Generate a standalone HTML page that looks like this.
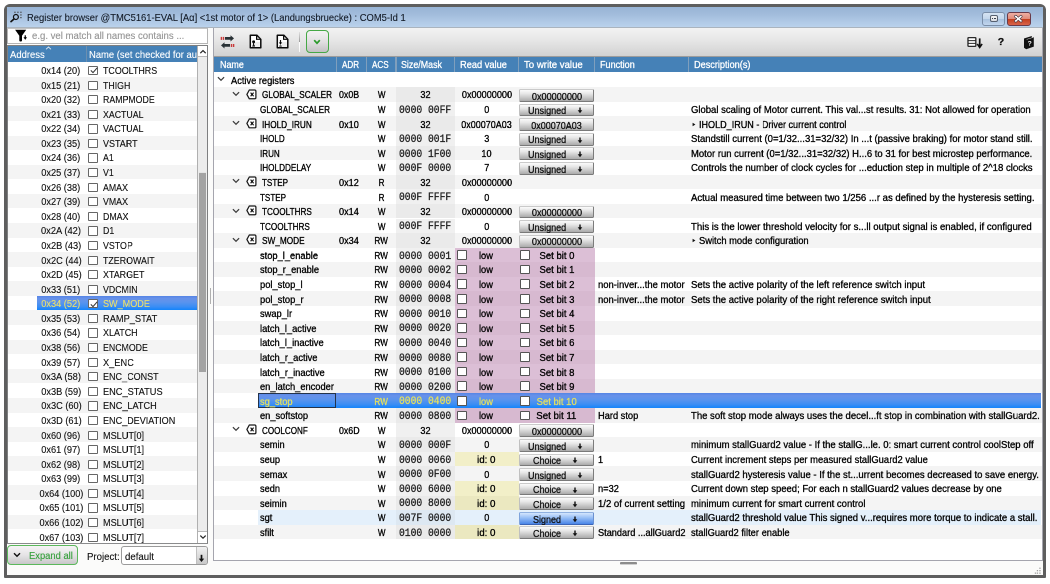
<!DOCTYPE html>
<html><head><meta charset="utf-8"><title>Register browser</title>
<style>
*{box-sizing:border-box;margin:0;padding:0}
html,body{width:1050px;height:584px;overflow:hidden;background:#fff;font-family:"Liberation Sans",sans-serif;color:#000}
.a{position:absolute}
.t{position:absolute;white-space:nowrap;-webkit-text-stroke:0.3px currentColor}
#win{left:4px;top:4px;width:1042px;height:574px;background:#5e5e5e;border-radius:6px 6px 1px 1px}
#title{left:7px;top:7px;width:1036px;height:21px;background:linear-gradient(#99b5d6,#a2bcdc 35%,#b3cce8 80%,#bad2ec);border-bottom:1px solid #aab4be}
#client{left:7px;top:28px;width:1036px;height:547px;background:#fbfbfa}
.hdr{background:#4581b7}
.lrow{position:absolute;left:8px;width:189px;height:14.58px}
.rrow{position:absolute;left:214px;width:827.5px;height:14.58px}
.cb{position:absolute;border:1px solid #555;background:#fff;border-radius:1px}
.btn{position:absolute;height:12.6px;border:1px solid;border-color:#cacaca #7c7c7c #7a7a7a #c0c0c0;border-radius:1.5px;background:linear-gradient(#fbfbfb,#e6e6e6 35%,#ababab)}
.bblue{border-color:#8fb0e0 #6a90d0 #3a64b8 #7fa4dc;background:linear-gradient(#d4e6fd,#9cc2f7 40%,#4a86e8)}
.mono{font-family:"Liberation Mono",monospace}
</style></head><body><div style="position:absolute;left:0;top:0;width:1050px;height:584px;transform:scale(0.5);transform-origin:0 0;will-change:transform"><div style="position:absolute;left:0;top:0;width:1050px;height:584px;transform:scale(2);transform-origin:0 0">
<div id="win" class="a"></div>
<div id="title" class="a"></div>
<div id="client" class="a"></div>

<div class="t" style="left:27.00px;top:10.00px;height:15px;line-height:15px;font-size:10.2px;color:#141c28;-webkit-text-stroke:0.12px currentColor"><span style="display:inline-block;transform:scaleX(0.923);transform-origin:0 50%">Register browser @TMC5161-EVAL [Aα] &lt;1st motor of 1&gt; (Landungsbruecke) : COM5-Id 1</span></div>
<svg class="a" style="left:8px;top:8px" width="18" height="18" viewBox="0 0 18 18">
<circle cx="7.9" cy="9" r="2.45" fill="none" stroke="#111" stroke-width="1.25"/>
<line x1="6.1" y1="10.9" x2="3" y2="13.6" stroke="#111" stroke-width="1.7" stroke-linecap="round"/>
<g fill="#5a5f66"><rect x="6" y="3.7" width="1.8" height="1.1"/><rect x="9" y="3.7" width="1.8" height="1.1"/><rect x="12" y="3.7" width="1.8" height="1.1"/><rect x="12" y="6.4" width="1.8" height="1.1"/><rect x="12" y="9.1" width="1.8" height="1.1"/></g>
</svg>
<div class="a" style="left:982px;top:12px;width:23px;height:13.5px;border:1px solid #7a8ea8;border-radius:3px;background:linear-gradient(#d6e4f3,#c3d6ec 50%,#a9c2df 52%,#c2d6ee)"></div>
<div class="a" style="left:989.6px;top:15.3px;width:8.2px;height:6.4px;border:1px solid #566070;border-radius:2px;background:linear-gradient(#f6f6f6,#d8dce2)"></div><div class="a" style="left:992px;top:17.8px;width:1.4px;height:1.4px;background:#3a4250"></div><div class="a" style="left:994.2px;top:17.8px;width:1.4px;height:1.4px;background:#3a4250"></div>
<div class="a" style="left:1007px;top:12px;width:23.5px;height:13.5px;border:1px solid #6a3a48;border-radius:3px;background:linear-gradient(#eeb0a4,#e08a78 50%,#c4401f 52%,#d8644a)"></div>
<svg class="a" style="left:1013px;top:14px" width="11" height="10" viewBox="0 0 11 10"><path d="M2.6 2.4 L8 7 M8 2.4 L2.6 7" stroke="#50404a" stroke-width="2.9" stroke-linecap="round"/><path d="M2.6 2.4 L8 7 M8 2.4 L2.6 7" stroke="#fff" stroke-width="1.5" stroke-linecap="round"/></svg>

<div class="a" style="left:7px;top:28.2px;width:201px;height:15.6px;background:#fff;border:1px solid #b4b4b4;border-top:1.3px solid #c4c4c4"></div>
<svg class="a" style="left:14px;top:29px" width="14" height="13" viewBox="0 0 14 13">
<path d="M1.1 0.8 H12.2 L8 6.7 V11.6 Q8 12.5 6.9 12.5 H6.4 Q5.3 12.5 5.3 11.6 V6.7 Z" fill="#000"/>
<path d="M10.65 6.3 H11.85 V8.3 H13 L11.25 10.9 L9.5 8.3 H10.65 Z" fill="#000"/>
</svg>
<div class="t" style="left:32.10px;top:29.30px;height:14.58px;line-height:14.58px;font-size:9.8px;color:#959595;-webkit-text-stroke:0.12px currentColor"><span style="display:inline-block;transform:scaleX(0.978);transform-origin:0 50%">e.g. vel match all names contains ...</span></div>
<div class="a" style="left:7px;top:45.4px;width:201px;height:498.4px;background:#fff;border:1px solid #7e7f80"></div>
<div class="a hdr" style="left:8px;top:46px;width:189px;height:16.3px"></div>
<div class="a" style="left:86px;top:46px;width:1px;height:16.3px;background:#6c8fb0"></div>
<div class="t" style="left:9.80px;top:48.10px;height:14.58px;line-height:14.58px;font-size:9.8px;color:#fff;-webkit-text-stroke:0.12px currentColor"><span style="display:inline-block;transform:scaleX(0.968);transform-origin:0 50%">Address</span></div>
<div class="a" style="left:89px;top:46px;width:107.5px;height:16px;overflow:hidden"><div class="t" style="left:0.00px;top:2.10px;height:14.58px;line-height:14.58px;font-size:9.8px;color:#fff;-webkit-text-stroke:0.12px currentColor"><span style="display:inline-block;transform:scaleX(0.963);transform-origin:0 50%">Name (set checked for au</span></div></div>
<svg class="a" style="left:44.5px;top:46.3px" width="7" height="4" viewBox="0 0 7 4"><path d="M1 3.3 L3.5 1 L6 3.3" stroke="#dfe8f2" stroke-width="0.9" fill="none"/></svg>
<div class="lrow" style="top:62.60px;background:#fff"></div>
<div class="t" style="left:31.20px;width:60.00px;text-align:center;top:64.00px;height:14.58px;line-height:14.58px;font-size:9.8px;color:#111;-webkit-text-stroke:0.12px currentColor"><span style="display:inline-block;transform:scaleX(0.942);transform-origin:50% 50%">0x14 (20)</span></div>
<div class="cb" style="left:88.3px;top:66.00px;width:9.6px;height:9.2px;border-color:#666;border-width:1.2px"></div>
<svg class="a" style="left:89.5px;top:67.30px" width="8" height="7" viewBox="0 0 8 7"><path d="M0.8 3.4 L3 5.6 L7.2 0.8" stroke="#333" stroke-width="1" fill="none"/></svg>
<div class="t" style="left:102.50px;top:64.00px;height:14.58px;line-height:14.58px;font-size:9.8px;color:#111;-webkit-text-stroke:0.12px currentColor"><span style="display:inline-block;transform:scaleX(0.907);transform-origin:0 50%">TCOOLTHRS</span></div>
<div class="lrow" style="top:77.18px;background:#f4f4f4"></div>
<div class="t" style="left:31.20px;width:60.00px;text-align:center;top:78.58px;height:14.58px;line-height:14.58px;font-size:9.8px;color:#111;-webkit-text-stroke:0.12px currentColor"><span style="display:inline-block;transform:scaleX(0.942);transform-origin:50% 50%">0x15 (21)</span></div>
<div class="cb" style="left:88.3px;top:80.58px;width:9.6px;height:9.2px;border-color:#666;border-width:1.2px"></div>
<div class="t" style="left:102.50px;top:78.58px;height:14.58px;line-height:14.58px;font-size:9.8px;color:#111;-webkit-text-stroke:0.12px currentColor"><span style="display:inline-block;transform:scaleX(0.896);transform-origin:0 50%">THIGH</span></div>
<div class="lrow" style="top:91.76px;background:#fff"></div>
<div class="t" style="left:31.20px;width:60.00px;text-align:center;top:93.16px;height:14.58px;line-height:14.58px;font-size:9.8px;color:#111;-webkit-text-stroke:0.12px currentColor"><span style="display:inline-block;transform:scaleX(0.942);transform-origin:50% 50%">0x20 (32)</span></div>
<div class="cb" style="left:88.3px;top:95.16px;width:9.6px;height:9.2px;border-color:#666;border-width:1.2px"></div>
<div class="t" style="left:102.50px;top:93.16px;height:14.58px;line-height:14.58px;font-size:9.8px;color:#111;-webkit-text-stroke:0.12px currentColor"><span style="display:inline-block;transform:scaleX(0.896);transform-origin:0 50%">RAMPMODE</span></div>
<div class="lrow" style="top:106.34px;background:#f4f4f4"></div>
<div class="t" style="left:31.20px;width:60.00px;text-align:center;top:107.74px;height:14.58px;line-height:14.58px;font-size:9.8px;color:#111;-webkit-text-stroke:0.12px currentColor"><span style="display:inline-block;transform:scaleX(0.942);transform-origin:50% 50%">0x21 (33)</span></div>
<div class="cb" style="left:88.3px;top:109.74px;width:9.6px;height:9.2px;border-color:#666;border-width:1.2px"></div>
<div class="t" style="left:102.50px;top:107.74px;height:14.58px;line-height:14.58px;font-size:9.8px;color:#111;-webkit-text-stroke:0.12px currentColor"><span style="display:inline-block;transform:scaleX(0.896);transform-origin:0 50%">XACTUAL</span></div>
<div class="lrow" style="top:120.92px;background:#fff"></div>
<div class="t" style="left:31.20px;width:60.00px;text-align:center;top:122.32px;height:14.58px;line-height:14.58px;font-size:9.8px;color:#111;-webkit-text-stroke:0.12px currentColor"><span style="display:inline-block;transform:scaleX(0.942);transform-origin:50% 50%">0x22 (34)</span></div>
<div class="cb" style="left:88.3px;top:124.32px;width:9.6px;height:9.2px;border-color:#666;border-width:1.2px"></div>
<div class="t" style="left:102.50px;top:122.32px;height:14.58px;line-height:14.58px;font-size:9.8px;color:#111;-webkit-text-stroke:0.12px currentColor"><span style="display:inline-block;transform:scaleX(0.911);transform-origin:0 50%">VACTUAL</span></div>
<div class="lrow" style="top:135.50px;background:#f4f4f4"></div>
<div class="t" style="left:31.20px;width:60.00px;text-align:center;top:136.90px;height:14.58px;line-height:14.58px;font-size:9.8px;color:#111;-webkit-text-stroke:0.12px currentColor"><span style="display:inline-block;transform:scaleX(0.942);transform-origin:50% 50%">0x23 (35)</span></div>
<div class="cb" style="left:88.3px;top:138.90px;width:9.6px;height:9.2px;border-color:#666;border-width:1.2px"></div>
<div class="t" style="left:102.50px;top:136.90px;height:14.58px;line-height:14.58px;font-size:9.8px;color:#111;-webkit-text-stroke:0.12px currentColor"><span style="display:inline-block;transform:scaleX(0.917);transform-origin:0 50%">VSTART</span></div>
<div class="lrow" style="top:150.08px;background:#fff"></div>
<div class="t" style="left:31.20px;width:60.00px;text-align:center;top:151.48px;height:14.58px;line-height:14.58px;font-size:9.8px;color:#111;-webkit-text-stroke:0.12px currentColor"><span style="display:inline-block;transform:scaleX(0.942);transform-origin:50% 50%">0x24 (36)</span></div>
<div class="cb" style="left:88.3px;top:153.48px;width:9.6px;height:9.2px;border-color:#666;border-width:1.2px"></div>
<div class="t" style="left:102.50px;top:151.48px;height:14.58px;line-height:14.58px;font-size:9.8px;color:#111;-webkit-text-stroke:0.12px currentColor"><span style="display:inline-block;transform:scaleX(0.896);transform-origin:0 50%">A1</span></div>
<div class="lrow" style="top:164.66px;background:#f4f4f4"></div>
<div class="t" style="left:31.20px;width:60.00px;text-align:center;top:166.06px;height:14.58px;line-height:14.58px;font-size:9.8px;color:#111;-webkit-text-stroke:0.12px currentColor"><span style="display:inline-block;transform:scaleX(0.942);transform-origin:50% 50%">0x25 (37)</span></div>
<div class="cb" style="left:88.3px;top:168.06px;width:9.6px;height:9.2px;border-color:#666;border-width:1.2px"></div>
<div class="t" style="left:102.50px;top:166.06px;height:14.58px;line-height:14.58px;font-size:9.8px;color:#111;-webkit-text-stroke:0.12px currentColor"><span style="display:inline-block;transform:scaleX(0.896);transform-origin:0 50%">V1</span></div>
<div class="lrow" style="top:179.24px;background:#fff"></div>
<div class="t" style="left:31.20px;width:60.00px;text-align:center;top:180.64px;height:14.58px;line-height:14.58px;font-size:9.8px;color:#111;-webkit-text-stroke:0.12px currentColor"><span style="display:inline-block;transform:scaleX(0.942);transform-origin:50% 50%">0x26 (38)</span></div>
<div class="cb" style="left:88.3px;top:182.64px;width:9.6px;height:9.2px;border-color:#666;border-width:1.2px"></div>
<div class="t" style="left:102.50px;top:180.64px;height:14.58px;line-height:14.58px;font-size:9.8px;color:#111;-webkit-text-stroke:0.12px currentColor"><span style="display:inline-block;transform:scaleX(0.896);transform-origin:0 50%">AMAX</span></div>
<div class="lrow" style="top:193.82px;background:#f4f4f4"></div>
<div class="t" style="left:31.20px;width:60.00px;text-align:center;top:195.22px;height:14.58px;line-height:14.58px;font-size:9.8px;color:#111;-webkit-text-stroke:0.12px currentColor"><span style="display:inline-block;transform:scaleX(0.942);transform-origin:50% 50%">0x27 (39)</span></div>
<div class="cb" style="left:88.3px;top:197.22px;width:9.6px;height:9.2px;border-color:#666;border-width:1.2px"></div>
<div class="t" style="left:102.50px;top:195.22px;height:14.58px;line-height:14.58px;font-size:9.8px;color:#111;-webkit-text-stroke:0.12px currentColor"><span style="display:inline-block;transform:scaleX(0.896);transform-origin:0 50%">VMAX</span></div>
<div class="lrow" style="top:208.40px;background:#fff"></div>
<div class="t" style="left:31.20px;width:60.00px;text-align:center;top:209.80px;height:14.58px;line-height:14.58px;font-size:9.8px;color:#111;-webkit-text-stroke:0.12px currentColor"><span style="display:inline-block;transform:scaleX(0.942);transform-origin:50% 50%">0x28 (40)</span></div>
<div class="cb" style="left:88.3px;top:211.80px;width:9.6px;height:9.2px;border-color:#666;border-width:1.2px"></div>
<div class="t" style="left:102.50px;top:209.80px;height:14.58px;line-height:14.58px;font-size:9.8px;color:#111;-webkit-text-stroke:0.12px currentColor"><span style="display:inline-block;transform:scaleX(0.896);transform-origin:0 50%">DMAX</span></div>
<div class="lrow" style="top:222.98px;background:#f4f4f4"></div>
<div class="t" style="left:31.20px;width:60.00px;text-align:center;top:224.38px;height:14.58px;line-height:14.58px;font-size:9.8px;color:#111;-webkit-text-stroke:0.12px currentColor"><span style="display:inline-block;transform:scaleX(0.953);transform-origin:50% 50%">0x2A (42)</span></div>
<div class="cb" style="left:88.3px;top:226.38px;width:9.6px;height:9.2px;border-color:#666;border-width:1.2px"></div>
<div class="t" style="left:102.50px;top:224.38px;height:14.58px;line-height:14.58px;font-size:9.8px;color:#111;-webkit-text-stroke:0.12px currentColor"><span style="display:inline-block;transform:scaleX(0.896);transform-origin:0 50%">D1</span></div>
<div class="lrow" style="top:237.56px;background:#fff"></div>
<div class="t" style="left:31.20px;width:60.00px;text-align:center;top:238.96px;height:14.58px;line-height:14.58px;font-size:9.8px;color:#111;-webkit-text-stroke:0.12px currentColor"><span style="display:inline-block;transform:scaleX(0.941);transform-origin:50% 50%">0x2B (43)</span></div>
<div class="cb" style="left:88.3px;top:240.96px;width:9.6px;height:9.2px;border-color:#666;border-width:1.2px"></div>
<div class="t" style="left:102.50px;top:238.96px;height:14.58px;line-height:14.58px;font-size:9.8px;color:#111;-webkit-text-stroke:0.12px currentColor"><span style="display:inline-block;transform:scaleX(0.901);transform-origin:0 50%">VSTOP</span></div>
<div class="lrow" style="top:252.14px;background:#f4f4f4"></div>
<div class="t" style="left:31.20px;width:60.00px;text-align:center;top:253.54px;height:14.58px;line-height:14.58px;font-size:9.8px;color:#111;-webkit-text-stroke:0.12px currentColor"><span style="display:inline-block;transform:scaleX(0.941);transform-origin:50% 50%">0x2C (44)</span></div>
<div class="cb" style="left:88.3px;top:255.54px;width:9.6px;height:9.2px;border-color:#666;border-width:1.2px"></div>
<div class="t" style="left:102.50px;top:253.54px;height:14.58px;line-height:14.58px;font-size:9.8px;color:#111;-webkit-text-stroke:0.12px currentColor"><span style="display:inline-block;transform:scaleX(0.902);transform-origin:0 50%">TZEROWAIT</span></div>
<div class="lrow" style="top:266.72px;background:#fff"></div>
<div class="t" style="left:31.20px;width:60.00px;text-align:center;top:268.12px;height:14.58px;line-height:14.58px;font-size:9.8px;color:#111;-webkit-text-stroke:0.12px currentColor"><span style="display:inline-block;transform:scaleX(0.941);transform-origin:50% 50%">0x2D (45)</span></div>
<div class="cb" style="left:88.3px;top:270.12px;width:9.6px;height:9.2px;border-color:#666;border-width:1.2px"></div>
<div class="t" style="left:102.50px;top:268.12px;height:14.58px;line-height:14.58px;font-size:9.8px;color:#111;-webkit-text-stroke:0.12px currentColor"><span style="display:inline-block;transform:scaleX(0.910);transform-origin:0 50%">XTARGET</span></div>
<div class="lrow" style="top:281.30px;background:#f4f4f4"></div>
<div class="t" style="left:31.20px;width:60.00px;text-align:center;top:282.70px;height:14.58px;line-height:14.58px;font-size:9.8px;color:#111;-webkit-text-stroke:0.12px currentColor"><span style="display:inline-block;transform:scaleX(0.942);transform-origin:50% 50%">0x33 (51)</span></div>
<div class="cb" style="left:88.3px;top:284.70px;width:9.6px;height:9.2px;border-color:#666;border-width:1.2px"></div>
<div class="t" style="left:102.50px;top:282.70px;height:14.58px;line-height:14.58px;font-size:9.8px;color:#111;-webkit-text-stroke:0.12px currentColor"><span style="display:inline-block;transform:scaleX(0.896);transform-origin:0 50%">VDCMIN</span></div>
<div class="lrow" style="top:295.88px;background:#fff"></div>
<div class="a" style="left:37px;top:295.88px;width:160px;height:14.58px;background:linear-gradient(#5585e6,#6892ea 18%,#5a94ee 45%,#3d8ef4 75%,#1485fb)"></div>
<div class="t" style="left:31.20px;width:60.00px;text-align:center;top:297.28px;height:14.58px;line-height:14.58px;font-size:9.8px;color:#e8e070;-webkit-text-stroke:0.12px currentColor"><span style="display:inline-block;transform:scaleX(0.942);transform-origin:50% 50%">0x34 (52)</span></div>
<div class="cb" style="left:88.3px;top:299.28px;width:9.6px;height:9.2px;border-color:#666;border-width:1.2px"></div>
<svg class="a" style="left:89.5px;top:300.58px" width="8" height="7" viewBox="0 0 8 7"><path d="M0.8 3.4 L3 5.6 L7.2 0.8" stroke="#333" stroke-width="1" fill="none"/></svg>
<div class="t" style="left:102.50px;top:297.28px;height:14.58px;line-height:14.58px;font-size:9.8px;color:#e8e070;-webkit-text-stroke:0.12px currentColor"><span style="display:inline-block;transform:scaleX(0.926);transform-origin:0 50%">SW_MODE</span></div>
<div class="lrow" style="top:310.46px;background:#f4f4f4"></div>
<div class="t" style="left:31.20px;width:60.00px;text-align:center;top:311.86px;height:14.58px;line-height:14.58px;font-size:9.8px;color:#111;-webkit-text-stroke:0.12px currentColor"><span style="display:inline-block;transform:scaleX(0.942);transform-origin:50% 50%">0x35 (53)</span></div>
<div class="cb" style="left:88.3px;top:313.86px;width:9.6px;height:9.2px;border-color:#666;border-width:1.2px"></div>
<div class="t" style="left:102.50px;top:311.86px;height:14.58px;line-height:14.58px;font-size:9.8px;color:#111;-webkit-text-stroke:0.12px currentColor"><span style="display:inline-block;transform:scaleX(0.946);transform-origin:0 50%">RAMP_STAT</span></div>
<div class="lrow" style="top:325.04px;background:#fff"></div>
<div class="t" style="left:31.20px;width:60.00px;text-align:center;top:326.44px;height:14.58px;line-height:14.58px;font-size:9.8px;color:#111;-webkit-text-stroke:0.12px currentColor"><span style="display:inline-block;transform:scaleX(0.942);transform-origin:50% 50%">0x36 (54)</span></div>
<div class="cb" style="left:88.3px;top:328.44px;width:9.6px;height:9.2px;border-color:#666;border-width:1.2px"></div>
<div class="t" style="left:102.50px;top:326.44px;height:14.58px;line-height:14.58px;font-size:9.8px;color:#111;-webkit-text-stroke:0.12px currentColor"><span style="display:inline-block;transform:scaleX(0.913);transform-origin:0 50%">XLATCH</span></div>
<div class="lrow" style="top:339.62px;background:#f4f4f4"></div>
<div class="t" style="left:31.20px;width:60.00px;text-align:center;top:341.02px;height:14.58px;line-height:14.58px;font-size:9.8px;color:#111;-webkit-text-stroke:0.12px currentColor"><span style="display:inline-block;transform:scaleX(0.942);transform-origin:50% 50%">0x38 (56)</span></div>
<div class="cb" style="left:88.3px;top:343.02px;width:9.6px;height:9.2px;border-color:#666;border-width:1.2px"></div>
<div class="t" style="left:102.50px;top:341.02px;height:14.58px;line-height:14.58px;font-size:9.8px;color:#111;-webkit-text-stroke:0.12px currentColor"><span style="display:inline-block;transform:scaleX(0.896);transform-origin:0 50%">ENCMODE</span></div>
<div class="lrow" style="top:354.20px;background:#fff"></div>
<div class="t" style="left:31.20px;width:60.00px;text-align:center;top:355.60px;height:14.58px;line-height:14.58px;font-size:9.8px;color:#111;-webkit-text-stroke:0.12px currentColor"><span style="display:inline-block;transform:scaleX(0.942);transform-origin:50% 50%">0x39 (57)</span></div>
<div class="cb" style="left:88.3px;top:357.60px;width:9.6px;height:9.2px;border-color:#666;border-width:1.2px"></div>
<div class="t" style="left:102.50px;top:355.60px;height:14.58px;line-height:14.58px;font-size:9.8px;color:#111;-webkit-text-stroke:0.12px currentColor"><span style="display:inline-block;transform:scaleX(0.943);transform-origin:0 50%">X_ENC</span></div>
<div class="lrow" style="top:368.78px;background:#f4f4f4"></div>
<div class="t" style="left:31.20px;width:60.00px;text-align:center;top:370.18px;height:14.58px;line-height:14.58px;font-size:9.8px;color:#111;-webkit-text-stroke:0.12px currentColor"><span style="display:inline-block;transform:scaleX(0.953);transform-origin:50% 50%">0x3A (58)</span></div>
<div class="cb" style="left:88.3px;top:372.18px;width:9.6px;height:9.2px;border-color:#666;border-width:1.2px"></div>
<div class="t" style="left:102.50px;top:370.18px;height:14.58px;line-height:14.58px;font-size:9.8px;color:#111;-webkit-text-stroke:0.12px currentColor"><span style="display:inline-block;transform:scaleX(0.921);transform-origin:0 50%">ENC_CONST</span></div>
<div class="lrow" style="top:383.36px;background:#fff"></div>
<div class="t" style="left:31.20px;width:60.00px;text-align:center;top:384.76px;height:14.58px;line-height:14.58px;font-size:9.8px;color:#111;-webkit-text-stroke:0.12px currentColor"><span style="display:inline-block;transform:scaleX(0.941);transform-origin:50% 50%">0x3B (59)</span></div>
<div class="cb" style="left:88.3px;top:386.76px;width:9.6px;height:9.2px;border-color:#666;border-width:1.2px"></div>
<div class="t" style="left:102.50px;top:384.76px;height:14.58px;line-height:14.58px;font-size:9.8px;color:#111;-webkit-text-stroke:0.12px currentColor"><span style="display:inline-block;transform:scaleX(0.941);transform-origin:0 50%">ENC_STATUS</span></div>
<div class="lrow" style="top:397.94px;background:#f4f4f4"></div>
<div class="t" style="left:31.20px;width:60.00px;text-align:center;top:399.34px;height:14.58px;line-height:14.58px;font-size:9.8px;color:#111;-webkit-text-stroke:0.12px currentColor"><span style="display:inline-block;transform:scaleX(0.941);transform-origin:50% 50%">0x3C (60)</span></div>
<div class="cb" style="left:88.3px;top:401.34px;width:9.6px;height:9.2px;border-color:#666;border-width:1.2px"></div>
<div class="t" style="left:102.50px;top:399.34px;height:14.58px;line-height:14.58px;font-size:9.8px;color:#111;-webkit-text-stroke:0.12px currentColor"><span style="display:inline-block;transform:scaleX(0.934);transform-origin:0 50%">ENC_LATCH</span></div>
<div class="lrow" style="top:412.52px;background:#fff"></div>
<div class="t" style="left:31.20px;width:60.00px;text-align:center;top:413.92px;height:14.58px;line-height:14.58px;font-size:9.8px;color:#111;-webkit-text-stroke:0.12px currentColor"><span style="display:inline-block;transform:scaleX(0.941);transform-origin:50% 50%">0x3D (61)</span></div>
<div class="cb" style="left:88.3px;top:415.92px;width:9.6px;height:9.2px;border-color:#666;border-width:1.2px"></div>
<div class="t" style="left:102.50px;top:413.92px;height:14.58px;line-height:14.58px;font-size:9.8px;color:#111;-webkit-text-stroke:0.12px currentColor"><span style="display:inline-block;transform:scaleX(0.924);transform-origin:0 50%">ENC_DEVIATION</span></div>
<div class="lrow" style="top:427.10px;background:#f4f4f4"></div>
<div class="t" style="left:31.20px;width:60.00px;text-align:center;top:428.50px;height:14.58px;line-height:14.58px;font-size:9.8px;color:#111;-webkit-text-stroke:0.12px currentColor"><span style="display:inline-block;transform:scaleX(0.942);transform-origin:50% 50%">0x60 (96)</span></div>
<div class="cb" style="left:88.3px;top:430.50px;width:9.6px;height:9.2px;border-color:#666;border-width:1.2px"></div>
<div class="t" style="left:102.50px;top:428.50px;height:14.58px;line-height:14.58px;font-size:9.8px;color:#111;-webkit-text-stroke:0.12px currentColor"><span style="display:inline-block;transform:scaleX(0.931);transform-origin:0 50%">MSLUT[0]</span></div>
<div class="lrow" style="top:441.68px;background:#fff"></div>
<div class="t" style="left:31.20px;width:60.00px;text-align:center;top:443.08px;height:14.58px;line-height:14.58px;font-size:9.8px;color:#111;-webkit-text-stroke:0.12px currentColor"><span style="display:inline-block;transform:scaleX(0.942);transform-origin:50% 50%">0x61 (97)</span></div>
<div class="cb" style="left:88.3px;top:445.08px;width:9.6px;height:9.2px;border-color:#666;border-width:1.2px"></div>
<div class="t" style="left:102.50px;top:443.08px;height:14.58px;line-height:14.58px;font-size:9.8px;color:#111;-webkit-text-stroke:0.12px currentColor"><span style="display:inline-block;transform:scaleX(0.931);transform-origin:0 50%">MSLUT[1]</span></div>
<div class="lrow" style="top:456.26px;background:#f4f4f4"></div>
<div class="t" style="left:31.20px;width:60.00px;text-align:center;top:457.66px;height:14.58px;line-height:14.58px;font-size:9.8px;color:#111;-webkit-text-stroke:0.12px currentColor"><span style="display:inline-block;transform:scaleX(0.942);transform-origin:50% 50%">0x62 (98)</span></div>
<div class="cb" style="left:88.3px;top:459.66px;width:9.6px;height:9.2px;border-color:#666;border-width:1.2px"></div>
<div class="t" style="left:102.50px;top:457.66px;height:14.58px;line-height:14.58px;font-size:9.8px;color:#111;-webkit-text-stroke:0.12px currentColor"><span style="display:inline-block;transform:scaleX(0.931);transform-origin:0 50%">MSLUT[2]</span></div>
<div class="lrow" style="top:470.84px;background:#fff"></div>
<div class="t" style="left:31.20px;width:60.00px;text-align:center;top:472.24px;height:14.58px;line-height:14.58px;font-size:9.8px;color:#111;-webkit-text-stroke:0.12px currentColor"><span style="display:inline-block;transform:scaleX(0.942);transform-origin:50% 50%">0x63 (99)</span></div>
<div class="cb" style="left:88.3px;top:474.24px;width:9.6px;height:9.2px;border-color:#666;border-width:1.2px"></div>
<div class="t" style="left:102.50px;top:472.24px;height:14.58px;line-height:14.58px;font-size:9.8px;color:#111;-webkit-text-stroke:0.12px currentColor"><span style="display:inline-block;transform:scaleX(0.931);transform-origin:0 50%">MSLUT[3]</span></div>
<div class="lrow" style="top:485.42px;background:#f4f4f4"></div>
<div class="t" style="left:31.20px;width:60.00px;text-align:center;top:486.82px;height:14.58px;line-height:14.58px;font-size:9.8px;color:#111;-webkit-text-stroke:0.12px currentColor"><span style="display:inline-block;transform:scaleX(0.937);transform-origin:50% 50%">0x64 (100)</span></div>
<div class="cb" style="left:88.3px;top:488.82px;width:9.6px;height:9.2px;border-color:#666;border-width:1.2px"></div>
<div class="t" style="left:102.50px;top:486.82px;height:14.58px;line-height:14.58px;font-size:9.8px;color:#111;-webkit-text-stroke:0.12px currentColor"><span style="display:inline-block;transform:scaleX(0.931);transform-origin:0 50%">MSLUT[4]</span></div>
<div class="lrow" style="top:500.00px;background:#fff"></div>
<div class="t" style="left:31.20px;width:60.00px;text-align:center;top:501.40px;height:14.58px;line-height:14.58px;font-size:9.8px;color:#111;-webkit-text-stroke:0.12px currentColor"><span style="display:inline-block;transform:scaleX(0.937);transform-origin:50% 50%">0x65 (101)</span></div>
<div class="cb" style="left:88.3px;top:503.40px;width:9.6px;height:9.2px;border-color:#666;border-width:1.2px"></div>
<div class="t" style="left:102.50px;top:501.40px;height:14.58px;line-height:14.58px;font-size:9.8px;color:#111;-webkit-text-stroke:0.12px currentColor"><span style="display:inline-block;transform:scaleX(0.931);transform-origin:0 50%">MSLUT[5]</span></div>
<div class="lrow" style="top:514.58px;background:#f4f4f4"></div>
<div class="t" style="left:31.20px;width:60.00px;text-align:center;top:515.98px;height:14.58px;line-height:14.58px;font-size:9.8px;color:#111;-webkit-text-stroke:0.12px currentColor"><span style="display:inline-block;transform:scaleX(0.937);transform-origin:50% 50%">0x66 (102)</span></div>
<div class="cb" style="left:88.3px;top:517.98px;width:9.6px;height:9.2px;border-color:#666;border-width:1.2px"></div>
<div class="t" style="left:102.50px;top:515.98px;height:14.58px;line-height:14.58px;font-size:9.8px;color:#111;-webkit-text-stroke:0.12px currentColor"><span style="display:inline-block;transform:scaleX(0.931);transform-origin:0 50%">MSLUT[6]</span></div>
<div class="lrow" style="top:529.16px;background:#fff"></div>
<div class="t" style="left:31.20px;width:60.00px;text-align:center;top:530.56px;height:14.58px;line-height:14.58px;font-size:9.8px;color:#111;-webkit-text-stroke:0.12px currentColor"><span style="display:inline-block;transform:scaleX(0.937);transform-origin:50% 50%">0x67 (103)</span></div>
<div class="cb" style="left:88.3px;top:532.56px;width:9.6px;height:9.2px;border-color:#666;border-width:1.2px"></div>
<div class="t" style="left:102.50px;top:530.56px;height:14.58px;line-height:14.58px;font-size:9.8px;color:#111;-webkit-text-stroke:0.12px currentColor"><span style="display:inline-block;transform:scaleX(0.931);transform-origin:0 50%">MSLUT[7]</span></div>
<div class="a" style="left:7px;top:542.9px;width:201px;height:1px;background:#8a8b8c"></div>
<div class="a" style="left:197.3px;top:46.3px;width:9.8px;height:497px;background:#ececec;border-left:1px solid #b0b0b0"></div>
<div class="a" style="left:198.1px;top:46.3px;width:9px;height:11.2px;background:#fff;border-bottom:1px solid #b8b8b8"></div>
<svg class="a" style="left:199px;top:48.5px" width="8" height="6" viewBox="0 0 8 6"><path d="M1.3 4.2 L4 1.6 L6.7 4.2" stroke="#222" stroke-width="1.2" fill="none"/></svg>
<div class="a" style="left:198.1px;top:531px;width:9px;height:12.3px;background:#fff;border-top:1px solid #b8b8b8"></div>
<svg class="a" style="left:199px;top:534px" width="8" height="6" viewBox="0 0 8 6"><path d="M1.3 1.6 L4 4.2 L6.7 1.6" stroke="#222" stroke-width="1.2" fill="none"/></svg>
<div class="a" style="left:198.8px;top:172.2px;width:7.5px;height:200.3px;background:#a3a3a3;border-top:1px solid #e4e4e4"></div>
<div class="a" style="left:209.8px;top:288.4px;width:1.2px;height:15.6px;background:#b0b0b0"></div>
<div class="a" style="left:7px;top:545.3px;width:71px;height:19.7px;border:1.3px solid #5cb85c;border-radius:4px;background:linear-gradient(#f6f4f6,#e6e4e6 50%,#c9c8ca)"></div>
<svg class="a" style="left:13px;top:552px" width="8" height="6" viewBox="0 0 8 6"><path d="M1 1.3 L4 4.3 L7 1.3" stroke="#111" stroke-width="1.4" fill="none"/></svg>
<div class="t" style="left:29.00px;top:547.80px;height:15px;line-height:15px;font-size:9.8px;color:#36a03c;-webkit-text-stroke:0.12px currentColor"><span style="display:inline-block;transform:scaleX(0.958);transform-origin:0 50%">Expand all</span></div>
<div class="t" style="left:86.70px;top:548.50px;height:15px;line-height:15px;font-size:9.8px;color:#111;-webkit-text-stroke:0.12px currentColor"><span style="display:inline-block;transform:scaleX(0.982);transform-origin:0 50%">Project:</span></div>
<div class="a" style="left:121px;top:546px;width:86.7px;height:19.4px;border:1px solid #9a9a9a;border-radius:3px;background:#fff;overflow:hidden">
<div class="a" style="left:73.7px;top:0;width:12px;height:18px;border-left:1px solid #c0c0c0;background:linear-gradient(#f2f2f2,#c6c6c6)"></div></div>
<svg class="a" style="left:198.3px;top:553.6px" width="7" height="9" viewBox="0 0 7 9"><path d="M3.5 0.8 V6" stroke="#111" stroke-width="1.7"/><path d="M0.8 4.6 L3.5 8 L6.2 4.6 Z" fill="#111"/></svg>
<div class="t" style="left:125.40px;top:548.50px;height:15px;line-height:15px;font-size:9.8px;color:#111;-webkit-text-stroke:0.12px currentColor"><span style="display:inline-block;transform:scaleX(0.984);transform-origin:0 50%">default</span></div>
<div class="a" style="left:213.3px;top:28px;width:829.5px;height:532.8px;background:#fff;border:1px solid #a5a5ae;border-top:none"></div>
<div class="a" style="left:214px;top:28.2px;width:828px;height:28.4px;background:linear-gradient(#f3f3f3,#e6e6e6 45%,#d2d2d2);border-bottom:1px solid #9c9c9c"></div>
<svg class="a" style="left:219px;top:34px" width="17" height="16" viewBox="0 0 17 16">
<g fill="#c83a3a"><rect x="1.7" y="2.9" width="1.4" height="3"/><rect x="3.8" y="2.9" width="1.4" height="3"/>
<rect x="11.8" y="10" width="1.4" height="3"/><rect x="13.9" y="10" width="1.4" height="3"/></g>
<path d="M6 3 H11.5 V1.3 L15 4.4 L11.5 7.5 V5.8 H6 Z" fill="#2a3236"/>
<path d="M11 10 H5.5 V8.3 L2 11.4 L5.5 14.5 V12.8 H11 Z" fill="#2a3236"/>
</svg>
<svg class="a" style="left:248.6px;top:34px" width="13" height="15" viewBox="0 0 13 15">
<path d="M1.3 1.2 H7.8 L11.8 5.4 V13.7 H1.3 Z" fill="#fff" stroke="#0a0a0a" stroke-width="1.5" stroke-linejoin="round"/>
<path d="M7.6 1.8 V5.3 H11.4" fill="none" stroke="#0a0a0a" stroke-width="1.2"/>
<path d="M8.4 2.6 L10.6 4.7 H8.4 Z" fill="#b8b8b8"/>
<rect x="6" y="8" width="4.8" height="4.8" fill="#ededed"/>
<circle cx="4.5" cy="7.7" r="1.35" fill="#000"/><rect x="3.9" y="8" width="1.2" height="3.6" fill="#111"/><path d="M3.1 12.6 L3.6 11.2 H5.4 L5.9 12.6 Z" fill="#222"/>
</svg>
<svg class="a" style="left:275.7px;top:34px" width="13" height="15" viewBox="0 0 13 15">
<path d="M1.3 1.2 H7.8 L11.8 5.4 V13.7 H1.3 Z" fill="#fff" stroke="#0a0a0a" stroke-width="1.5" stroke-linejoin="round"/>
<path d="M7.6 1.8 V5.3 H11.4" fill="none" stroke="#0a0a0a" stroke-width="1.2"/>
<path d="M8.4 2.6 L10.6 4.7 H8.4 Z" fill="#b8b8b8"/>
<rect x="6" y="8" width="4.8" height="4.8" fill="#ededed"/>
<rect x="3.9" y="6" width="1.2" height="3" fill="#111"/><path d="M2.9 8.4 H6.1 L4.5 10.9 Z" fill="#000"/><path d="M3.1 12.6 L3.6 11.4 H5.4 L5.9 12.6 Z" fill="#222"/>
</svg>
<div class="a" style="left:299px;top:32px;width:1px;height:10px;background:linear-gradient(#e0e0e0,#9a9a9a)"></div><div class="a" style="left:299px;top:42px;width:1px;height:10px;background:linear-gradient(#fff,#f8f8f8)"></div>
<div class="a" style="left:305.9px;top:30.4px;width:23.3px;height:23px;border:1.2px solid #46a846;border-radius:4px;background:linear-gradient(#f4f2f4,#e2e0e2 50%,#c4c2c4)"></div>
<svg class="a" style="left:313px;top:38.5px" width="8" height="6" viewBox="0 0 8 6"><path d="M1.2 1.2 L4 4.2 L6.8 1.2" stroke="#2a9a2a" stroke-width="1.7" fill="none"/></svg>
<svg class="a" style="left:966px;top:36px" width="17" height="13" viewBox="0 0 17 13">
<rect x="1.3" y="1" width="9.2" height="10" rx="1.2" fill="#2a2a2a"/>
<g fill="#fff"><rect x="2.6" y="2.3" width="6.6" height="1.8" rx="0.5"/><rect x="2.6" y="5.1" width="6.6" height="1.8" rx="0.5"/><rect x="2.6" y="7.9" width="6.6" height="1.8" rx="0.5"/></g>
<path d="M13.7 2.4 V10.2" stroke="#111" stroke-width="1.7"/><path d="M11.3 7.9 L13.7 11.4 L16.1 7.9" stroke="#111" stroke-width="1.6" fill="none" stroke-linejoin="miter"/>
</svg>
<div class="t" style="left:997.8px;top:33.7px;font-size:10.5px;font-weight:bold;color:#111;line-height:14px">?</div>
<svg class="a" style="left:1022.5px;top:34.5px" width="12" height="15" viewBox="0 0 12 15">
<path d="M1 3.5 L8.8 1 V2.6 L10.8 2.2 V11.6 L3.2 14.2 L1 12.8 Z" fill="#111"/>
<path d="M3.6 4.4 L10.2 2.4" stroke="#ddd" stroke-width="0.5"/>
<text x="6.7" y="10.6" font-family="Liberation Sans" font-size="6.8" font-weight="bold" fill="#fff" text-anchor="middle">?</text>
</svg>
<div class="a hdr" style="left:214px;top:56.6px;width:827.5px;height:15.7px"></div>
<div class="t" style="left:219.50px;top:57.70px;height:14.58px;line-height:14.58px;font-size:9.8px;color:#fff;"><span style="display:inline-block;transform:scaleX(0.912);transform-origin:0 50%">Name</span></div>
<div class="a" style="left:335.7px;top:56.6px;width:1.2px;height:15.7px;background:#7f9fbd"></div>
<div class="t" style="left:341.70px;top:57.70px;height:14.58px;line-height:14.58px;font-size:9.8px;color:#fff;"><span style="display:inline-block;transform:scaleX(0.824);transform-origin:0 50%">ADR</span></div>
<div class="a" style="left:366.1px;top:56.6px;width:1.2px;height:15.7px;background:#7f9fbd"></div>
<div class="t" style="left:372.10px;top:57.70px;height:14.58px;line-height:14.58px;font-size:9.8px;color:#fff;"><span style="display:inline-block;transform:scaleX(0.824);transform-origin:0 50%">ACS</span></div>
<div class="a" style="left:395.4px;top:56.6px;width:1.2px;height:15.7px;background:#7f9fbd"></div>
<div class="t" style="left:401.40px;top:57.70px;height:14.58px;line-height:14.58px;font-size:9.8px;color:#fff;"><span style="display:inline-block;transform:scaleX(0.907);transform-origin:0 50%">Size/Mask</span></div>
<div class="a" style="left:454.3px;top:56.6px;width:1.2px;height:15.7px;background:#7f9fbd"></div>
<div class="t" style="left:460.30px;top:57.70px;height:14.58px;line-height:14.58px;font-size:9.8px;color:#fff;"><span style="display:inline-block;transform:scaleX(0.946);transform-origin:0 50%">Read value</span></div>
<div class="a" style="left:518.1px;top:56.6px;width:1.2px;height:15.7px;background:#7f9fbd"></div>
<div class="t" style="left:524.10px;top:57.70px;height:14.58px;line-height:14.58px;font-size:9.8px;color:#fff;"><span style="display:inline-block;transform:scaleX(0.981);transform-origin:0 50%">To write value</span></div>
<div class="a" style="left:594.3px;top:56.6px;width:1.2px;height:15.7px;background:#7f9fbd"></div>
<div class="t" style="left:600.30px;top:57.70px;height:14.58px;line-height:14.58px;font-size:9.8px;color:#fff;"><span style="display:inline-block;transform:scaleX(0.925);transform-origin:0 50%">Function</span></div>
<div class="a" style="left:688.0px;top:56.6px;width:1.2px;height:15.7px;background:#7f9fbd"></div>
<div class="t" style="left:694.00px;top:57.70px;height:14.58px;line-height:14.58px;font-size:9.8px;color:#fff;"><span style="display:inline-block;transform:scaleX(0.934);transform-origin:0 50%">Description(s)</span></div>
<div class="rrow" style="top:72.70px;background:#fff"></div>
<svg class="a" style="left:217.0px;top:76.40px" width="8" height="6" viewBox="0 0 8 6"><path d="M0.9 1.2 L4 4.3 L7.1 1.2" stroke="#3a3a3a" stroke-width="1.2" fill="none"/></svg>
<div class="t" style="left:230.80px;top:73.90px;height:14.58px;line-height:14.58px;font-size:9.8px;color:#000;"><span style="display:inline-block;transform:scaleX(0.947);transform-origin:0 50%">Active registers</span></div>
<div class="rrow" style="top:87.28px;background:#f4f4f4"></div>
<div class="a" style="left:395.9px;top:87.28px;width:58.9px;height:14.58px;background:#eaeaea"></div>
<svg class="a" style="left:231.5px;top:90.98px" width="8" height="6" viewBox="0 0 8 6"><path d="M0.9 1.2 L4 4.3 L7.1 1.2" stroke="#3a3a3a" stroke-width="1.2" fill="none"/></svg>
<svg class="a" style="left:245.6px;top:88.68px" width="11" height="11" viewBox="0 0 11 11"><path d="M3.3 1 H8.6 Q9.9 1 9.9 2.3 V8.5 Q9.9 9.8 8.6 9.8 H3.3 L0.9 5.4 Z" fill="#fff" stroke="#1a1a1a" stroke-width="1.25" stroke-linejoin="round"/><path d="M4.6 3.6 L7.6 7.2 M7.6 3.6 L4.6 7.2" stroke="#111" stroke-width="1.15"/><path d="M5.2 5.4 H7" stroke="#111" stroke-width="1.2"/></svg>
<div class="t" style="left:261.80px;top:88.48px;height:14.58px;line-height:14.58px;font-size:9.8px;color:#000;"><span style="display:inline-block;transform:scaleX(0.835);transform-origin:0 50%">GLOBAL_SCALER</span></div>
<div class="t" style="left:338.60px;top:88.48px;height:14.58px;line-height:14.58px;font-size:9.8px;color:#000;"><span style="display:inline-block;transform:scaleX(0.901);transform-origin:0 50%">0x0B</span></div>
<div class="t" style="left:366.60px;width:29.30px;text-align:center;top:88.48px;height:14.58px;line-height:14.58px;font-size:9.8px;color:#000;"><span style="display:inline-block;transform:scaleX(0.824);transform-origin:50% 50%">W</span></div>
<div class="t" style="left:395.90px;width:58.90px;text-align:center;top:88.48px;height:14.58px;line-height:14.58px;font-size:9.8px;color:#000;"><span style="display:inline-block;transform:scaleX(0.929);transform-origin:50% 50%">32</span></div>
<div class="t" style="left:454.80px;width:63.80px;text-align:center;top:88.48px;height:14.58px;line-height:14.58px;font-size:9.8px;color:#000;"><span style="display:inline-block;transform:scaleX(0.930);transform-origin:50% 50%">0x00000000</span></div>
<div class="btn" style="left:519.3px;top:89.03px;width:74.7px;height:12.8px"></div>
<div class="t" style="left:519.30px;width:74.70px;text-align:center;top:89.68px;height:14.58px;line-height:14.58px;font-size:9.8px;color:#111;"><span style="display:inline-block;transform:scaleX(0.930);transform-origin:50% 50%">0x00000000</span></div>
<div class="rrow" style="top:101.86px;background:#fff"></div>
<div class="a" style="left:395.9px;top:101.86px;width:58.9px;height:14.58px;background:#f0f0f0"></div>
<div class="t" style="left:260.30px;top:103.06px;height:14.58px;line-height:14.58px;font-size:9.8px;color:#000;"><span style="display:inline-block;transform:scaleX(0.835);transform-origin:0 50%">GLOBAL_SCALER</span></div>
<div class="t" style="left:366.60px;width:29.30px;text-align:center;top:103.06px;height:14.58px;line-height:14.58px;font-size:9.8px;color:#000;"><span style="display:inline-block;transform:scaleX(0.824);transform-origin:50% 50%">W</span></div>
<div class="t mono" style="left:398.6px;top:102.76px;height:14.58px;line-height:14.58px;font-size:10.8px;-webkit-text-stroke:0.3px #1e1e1e;color:#1e1e1e"><span style="display:inline-block;transform:scaleX(0.895);transform-origin:0 50%">0000 00FF</span></div>
<div class="t" style="left:454.80px;width:63.80px;text-align:center;top:103.06px;height:14.58px;line-height:14.58px;font-size:9.8px;color:#000;"><span style="display:inline-block;transform:scaleX(0.929);transform-origin:50% 50%">0</span></div>
<div class="btn" style="left:519.3px;top:103.61px;width:74.7px;height:12.8px"></div>
<div class="t" style="left:528.08px;top:104.26px;height:14.58px;line-height:14.58px;font-size:9.8px;color:#111;"><span style="display:inline-block;transform:scaleX(0.923);transform-origin:0 50%">Unsigned</span></div>
<svg class="a" style="left:577.02px;top:107.46px" width="6" height="7" viewBox="0 0 6 7"><path d="M3 0.5 V4.2" stroke="#111" stroke-width="1.4"/><path d="M0.7 3.3 L3 6.3 L5.3 3.3 Z" fill="#111"/></svg>
<div class="t" style="left:691.00px;top:103.06px;height:14.58px;line-height:14.58px;font-size:9.8px;color:#000;"><span style="display:inline-block;transform:scaleX(0.969);transform-origin:0 50%">Global scaling of Motor current. This val...st results. 31: Not allowed for operation</span></div>
<div class="rrow" style="top:116.44px;background:#f4f4f4"></div>
<div class="a" style="left:395.9px;top:116.44px;width:58.9px;height:14.58px;background:#eaeaea"></div>
<svg class="a" style="left:231.5px;top:120.14px" width="8" height="6" viewBox="0 0 8 6"><path d="M0.9 1.2 L4 4.3 L7.1 1.2" stroke="#3a3a3a" stroke-width="1.2" fill="none"/></svg>
<svg class="a" style="left:245.6px;top:117.84px" width="11" height="11" viewBox="0 0 11 11"><path d="M3.3 1 H8.6 Q9.9 1 9.9 2.3 V8.5 Q9.9 9.8 8.6 9.8 H3.3 L0.9 5.4 Z" fill="#fff" stroke="#1a1a1a" stroke-width="1.25" stroke-linejoin="round"/><path d="M4.6 3.6 L7.6 7.2 M7.6 3.6 L4.6 7.2" stroke="#111" stroke-width="1.15"/><path d="M5.2 5.4 H7" stroke="#111" stroke-width="1.2"/></svg>
<div class="t" style="left:261.80px;top:117.64px;height:14.58px;line-height:14.58px;font-size:9.8px;color:#000;"><span style="display:inline-block;transform:scaleX(0.839);transform-origin:0 50%">IHOLD_IRUN</span></div>
<div class="t" style="left:338.60px;top:117.64px;height:14.58px;line-height:14.58px;font-size:9.8px;color:#000;"><span style="display:inline-block;transform:scaleX(0.932);transform-origin:0 50%">0x10</span></div>
<div class="t" style="left:366.60px;width:29.30px;text-align:center;top:117.64px;height:14.58px;line-height:14.58px;font-size:9.8px;color:#000;"><span style="display:inline-block;transform:scaleX(0.824);transform-origin:50% 50%">W</span></div>
<div class="t" style="left:395.90px;width:58.90px;text-align:center;top:117.64px;height:14.58px;line-height:14.58px;font-size:9.8px;color:#000;"><span style="display:inline-block;transform:scaleX(0.929);transform-origin:50% 50%">32</span></div>
<div class="t" style="left:454.80px;width:63.80px;text-align:center;top:117.64px;height:14.58px;line-height:14.58px;font-size:9.8px;color:#000;"><span style="display:inline-block;transform:scaleX(0.918);transform-origin:50% 50%">0x00070A03</span></div>
<div class="btn" style="left:519.3px;top:118.19px;width:74.7px;height:12.8px"></div>
<div class="t" style="left:519.30px;width:74.70px;text-align:center;top:118.84px;height:14.58px;line-height:14.58px;font-size:9.8px;color:#111;"><span style="display:inline-block;transform:scaleX(0.918);transform-origin:50% 50%">0x00070A03</span></div>
<svg class="a" style="left:691.5px;top:121.74px" width="4" height="5" viewBox="0 0 4 5"><path d="M0.6 0.8 L3.4 2.5 L0.6 4.2 Z" fill="#111"/></svg>
<div class="t" style="left:698.60px;top:117.64px;height:14.58px;line-height:14.58px;font-size:9.8px;color:#000;"><span style="display:inline-block;transform:scaleX(0.924);transform-origin:0 50%">IHOLD_IRUN - Driver current control</span></div>
<div class="rrow" style="top:131.02px;background:#fff"></div>
<div class="a" style="left:395.9px;top:131.02px;width:58.9px;height:14.58px;background:#f0f0f0"></div>
<div class="t" style="left:260.30px;top:132.22px;height:14.58px;line-height:14.58px;font-size:9.8px;color:#000;"><span style="display:inline-block;transform:scaleX(0.824);transform-origin:0 50%">IHOLD</span></div>
<div class="t" style="left:366.60px;width:29.30px;text-align:center;top:132.22px;height:14.58px;line-height:14.58px;font-size:9.8px;color:#000;"><span style="display:inline-block;transform:scaleX(0.824);transform-origin:50% 50%">W</span></div>
<div class="t mono" style="left:398.6px;top:131.92px;height:14.58px;line-height:14.58px;font-size:10.8px;-webkit-text-stroke:0.3px #1e1e1e;color:#1e1e1e"><span style="display:inline-block;transform:scaleX(0.895);transform-origin:0 50%">0000 001F</span></div>
<div class="t" style="left:454.80px;width:63.80px;text-align:center;top:132.22px;height:14.58px;line-height:14.58px;font-size:9.8px;color:#000;"><span style="display:inline-block;transform:scaleX(0.929);transform-origin:50% 50%">3</span></div>
<div class="btn" style="left:519.3px;top:132.77px;width:74.7px;height:12.8px"></div>
<div class="t" style="left:528.08px;top:133.42px;height:14.58px;line-height:14.58px;font-size:9.8px;color:#111;"><span style="display:inline-block;transform:scaleX(0.923);transform-origin:0 50%">Unsigned</span></div>
<svg class="a" style="left:577.02px;top:136.62px" width="6" height="7" viewBox="0 0 6 7"><path d="M3 0.5 V4.2" stroke="#111" stroke-width="1.4"/><path d="M0.7 3.3 L3 6.3 L5.3 3.3 Z" fill="#111"/></svg>
<div class="t" style="left:691.00px;top:132.22px;height:14.58px;line-height:14.58px;font-size:9.8px;color:#000;"><span style="display:inline-block;transform:scaleX(0.971);transform-origin:0 50%">Standstill current (0=1/32...31=32/32) In ...t (passive braking) for motor stand still.</span></div>
<div class="rrow" style="top:145.60px;background:#f4f4f4"></div>
<div class="a" style="left:395.9px;top:145.60px;width:58.9px;height:14.58px;background:#eaeaea"></div>
<div class="t" style="left:260.30px;top:146.80px;height:14.58px;line-height:14.58px;font-size:9.8px;color:#000;"><span style="display:inline-block;transform:scaleX(0.824);transform-origin:0 50%">IRUN</span></div>
<div class="t" style="left:366.60px;width:29.30px;text-align:center;top:146.80px;height:14.58px;line-height:14.58px;font-size:9.8px;color:#000;"><span style="display:inline-block;transform:scaleX(0.824);transform-origin:50% 50%">W</span></div>
<div class="t mono" style="left:398.6px;top:146.50px;height:14.58px;line-height:14.58px;font-size:10.8px;-webkit-text-stroke:0.3px #1e1e1e;color:#1e1e1e"><span style="display:inline-block;transform:scaleX(0.895);transform-origin:0 50%">0000 1F00</span></div>
<div class="t" style="left:454.80px;width:63.80px;text-align:center;top:146.80px;height:14.58px;line-height:14.58px;font-size:9.8px;color:#000;"><span style="display:inline-block;transform:scaleX(0.929);transform-origin:50% 50%">10</span></div>
<div class="btn" style="left:519.3px;top:147.35px;width:74.7px;height:12.8px"></div>
<div class="t" style="left:528.08px;top:148.00px;height:14.58px;line-height:14.58px;font-size:9.8px;color:#111;"><span style="display:inline-block;transform:scaleX(0.923);transform-origin:0 50%">Unsigned</span></div>
<svg class="a" style="left:577.02px;top:151.20px" width="6" height="7" viewBox="0 0 6 7"><path d="M3 0.5 V4.2" stroke="#111" stroke-width="1.4"/><path d="M0.7 3.3 L3 6.3 L5.3 3.3 Z" fill="#111"/></svg>
<div class="t" style="left:691.00px;top:146.80px;height:14.58px;line-height:14.58px;font-size:9.8px;color:#000;"><span style="display:inline-block;transform:scaleX(0.967);transform-origin:0 50%">Motor run current (0=1/32...31=32/32) H...6 to 31 for best microstep performance.</span></div>
<div class="rrow" style="top:160.18px;background:#fff"></div>
<div class="a" style="left:395.9px;top:160.18px;width:58.9px;height:14.58px;background:#f0f0f0"></div>
<div class="t" style="left:260.30px;top:161.38px;height:14.58px;line-height:14.58px;font-size:9.8px;color:#000;"><span style="display:inline-block;transform:scaleX(0.834);transform-origin:0 50%">IHOLDDELAY</span></div>
<div class="t" style="left:366.60px;width:29.30px;text-align:center;top:161.38px;height:14.58px;line-height:14.58px;font-size:9.8px;color:#000;"><span style="display:inline-block;transform:scaleX(0.824);transform-origin:50% 50%">W</span></div>
<div class="t mono" style="left:398.6px;top:161.08px;height:14.58px;line-height:14.58px;font-size:10.8px;-webkit-text-stroke:0.3px #1e1e1e;color:#1e1e1e"><span style="display:inline-block;transform:scaleX(0.895);transform-origin:0 50%">000F 0000</span></div>
<div class="t" style="left:454.80px;width:63.80px;text-align:center;top:161.38px;height:14.58px;line-height:14.58px;font-size:9.8px;color:#000;"><span style="display:inline-block;transform:scaleX(0.929);transform-origin:50% 50%">7</span></div>
<div class="btn" style="left:519.3px;top:161.93px;width:74.7px;height:12.8px"></div>
<div class="t" style="left:528.08px;top:162.58px;height:14.58px;line-height:14.58px;font-size:9.8px;color:#111;"><span style="display:inline-block;transform:scaleX(0.923);transform-origin:0 50%">Unsigned</span></div>
<svg class="a" style="left:577.02px;top:165.78px" width="6" height="7" viewBox="0 0 6 7"><path d="M3 0.5 V4.2" stroke="#111" stroke-width="1.4"/><path d="M0.7 3.3 L3 6.3 L5.3 3.3 Z" fill="#111"/></svg>
<div class="t" style="left:691.00px;top:161.38px;height:14.58px;line-height:14.58px;font-size:9.8px;color:#000;"><span style="display:inline-block;transform:scaleX(0.978);transform-origin:0 50%">Controls the number of clock cycles for ...eduction step in multiple of 2^18 clocks</span></div>
<div class="rrow" style="top:174.76px;background:#f4f4f4"></div>
<div class="a" style="left:395.9px;top:174.76px;width:58.9px;height:14.58px;background:#eaeaea"></div>
<svg class="a" style="left:231.5px;top:178.46px" width="8" height="6" viewBox="0 0 8 6"><path d="M0.9 1.2 L4 4.3 L7.1 1.2" stroke="#3a3a3a" stroke-width="1.2" fill="none"/></svg>
<svg class="a" style="left:245.6px;top:176.16px" width="11" height="11" viewBox="0 0 11 11"><path d="M3.3 1 H8.6 Q9.9 1 9.9 2.3 V8.5 Q9.9 9.8 8.6 9.8 H3.3 L0.9 5.4 Z" fill="#fff" stroke="#1a1a1a" stroke-width="1.25" stroke-linejoin="round"/><path d="M4.6 3.6 L7.6 7.2 M7.6 3.6 L4.6 7.2" stroke="#111" stroke-width="1.15"/><path d="M5.2 5.4 H7" stroke="#111" stroke-width="1.2"/></svg>
<div class="t" style="left:261.80px;top:175.96px;height:14.58px;line-height:14.58px;font-size:9.8px;color:#000;"><span style="display:inline-block;transform:scaleX(0.824);transform-origin:0 50%">TSTEP</span></div>
<div class="t" style="left:338.60px;top:175.96px;height:14.58px;line-height:14.58px;font-size:9.8px;color:#000;"><span style="display:inline-block;transform:scaleX(0.932);transform-origin:0 50%">0x12</span></div>
<div class="t" style="left:366.60px;width:29.30px;text-align:center;top:175.96px;height:14.58px;line-height:14.58px;font-size:9.8px;color:#000;"><span style="display:inline-block;transform:scaleX(0.824);transform-origin:50% 50%">R</span></div>
<div class="t" style="left:395.90px;width:58.90px;text-align:center;top:175.96px;height:14.58px;line-height:14.58px;font-size:9.8px;color:#000;"><span style="display:inline-block;transform:scaleX(0.929);transform-origin:50% 50%">32</span></div>
<div class="t" style="left:454.80px;width:63.80px;text-align:center;top:175.96px;height:14.58px;line-height:14.58px;font-size:9.8px;color:#000;"><span style="display:inline-block;transform:scaleX(0.930);transform-origin:50% 50%">0x00000000</span></div>
<div class="rrow" style="top:189.34px;background:#fff"></div>
<div class="a" style="left:395.9px;top:189.34px;width:58.9px;height:14.58px;background:#f0f0f0"></div>
<div class="t" style="left:260.30px;top:190.54px;height:14.58px;line-height:14.58px;font-size:9.8px;color:#000;"><span style="display:inline-block;transform:scaleX(0.824);transform-origin:0 50%">TSTEP</span></div>
<div class="t" style="left:366.60px;width:29.30px;text-align:center;top:190.54px;height:14.58px;line-height:14.58px;font-size:9.8px;color:#000;"><span style="display:inline-block;transform:scaleX(0.824);transform-origin:50% 50%">R</span></div>
<div class="t mono" style="left:398.6px;top:190.24px;height:14.58px;line-height:14.58px;font-size:10.8px;-webkit-text-stroke:0.3px #1e1e1e;color:#1e1e1e"><span style="display:inline-block;transform:scaleX(0.895);transform-origin:0 50%">000F FFFF</span></div>
<div class="t" style="left:454.80px;width:63.80px;text-align:center;top:190.54px;height:14.58px;line-height:14.58px;font-size:9.8px;color:#000;"><span style="display:inline-block;transform:scaleX(0.929);transform-origin:50% 50%">0</span></div>
<div class="t" style="left:691.00px;top:190.54px;height:14.58px;line-height:14.58px;font-size:9.8px;color:#000;"><span style="display:inline-block;transform:scaleX(0.975);transform-origin:0 50%">Actual measured time between two 1/256 ...r as defined by the hysteresis setting.</span></div>
<div class="rrow" style="top:203.92px;background:#f4f4f4"></div>
<div class="a" style="left:395.9px;top:203.92px;width:58.9px;height:14.58px;background:#eaeaea"></div>
<svg class="a" style="left:231.5px;top:207.62px" width="8" height="6" viewBox="0 0 8 6"><path d="M0.9 1.2 L4 4.3 L7.1 1.2" stroke="#3a3a3a" stroke-width="1.2" fill="none"/></svg>
<svg class="a" style="left:245.6px;top:205.32px" width="11" height="11" viewBox="0 0 11 11"><path d="M3.3 1 H8.6 Q9.9 1 9.9 2.3 V8.5 Q9.9 9.8 8.6 9.8 H3.3 L0.9 5.4 Z" fill="#fff" stroke="#1a1a1a" stroke-width="1.25" stroke-linejoin="round"/><path d="M4.6 3.6 L7.6 7.2 M7.6 3.6 L4.6 7.2" stroke="#111" stroke-width="1.15"/><path d="M5.2 5.4 H7" stroke="#111" stroke-width="1.2"/></svg>
<div class="t" style="left:261.80px;top:205.12px;height:14.58px;line-height:14.58px;font-size:9.8px;color:#000;"><span style="display:inline-block;transform:scaleX(0.835);transform-origin:0 50%">TCOOLTHRS</span></div>
<div class="t" style="left:338.60px;top:205.12px;height:14.58px;line-height:14.58px;font-size:9.8px;color:#000;"><span style="display:inline-block;transform:scaleX(0.932);transform-origin:0 50%">0x14</span></div>
<div class="t" style="left:366.60px;width:29.30px;text-align:center;top:205.12px;height:14.58px;line-height:14.58px;font-size:9.8px;color:#000;"><span style="display:inline-block;transform:scaleX(0.824);transform-origin:50% 50%">W</span></div>
<div class="t" style="left:395.90px;width:58.90px;text-align:center;top:205.12px;height:14.58px;line-height:14.58px;font-size:9.8px;color:#000;"><span style="display:inline-block;transform:scaleX(0.929);transform-origin:50% 50%">32</span></div>
<div class="t" style="left:454.80px;width:63.80px;text-align:center;top:205.12px;height:14.58px;line-height:14.58px;font-size:9.8px;color:#000;"><span style="display:inline-block;transform:scaleX(0.930);transform-origin:50% 50%">0x00000000</span></div>
<div class="btn" style="left:519.3px;top:205.67px;width:74.7px;height:12.8px"></div>
<div class="t" style="left:519.30px;width:74.70px;text-align:center;top:206.32px;height:14.58px;line-height:14.58px;font-size:9.8px;color:#111;"><span style="display:inline-block;transform:scaleX(0.930);transform-origin:50% 50%">0x00000000</span></div>
<div class="rrow" style="top:218.50px;background:#fff"></div>
<div class="a" style="left:395.9px;top:218.50px;width:58.9px;height:14.58px;background:#f0f0f0"></div>
<div class="t" style="left:260.30px;top:219.70px;height:14.58px;line-height:14.58px;font-size:9.8px;color:#000;"><span style="display:inline-block;transform:scaleX(0.835);transform-origin:0 50%">TCOOLTHRS</span></div>
<div class="t" style="left:366.60px;width:29.30px;text-align:center;top:219.70px;height:14.58px;line-height:14.58px;font-size:9.8px;color:#000;"><span style="display:inline-block;transform:scaleX(0.824);transform-origin:50% 50%">W</span></div>
<div class="t mono" style="left:398.6px;top:219.40px;height:14.58px;line-height:14.58px;font-size:10.8px;-webkit-text-stroke:0.3px #1e1e1e;color:#1e1e1e"><span style="display:inline-block;transform:scaleX(0.895);transform-origin:0 50%">000F FFFF</span></div>
<div class="t" style="left:454.80px;width:63.80px;text-align:center;top:219.70px;height:14.58px;line-height:14.58px;font-size:9.8px;color:#000;"><span style="display:inline-block;transform:scaleX(0.929);transform-origin:50% 50%">0</span></div>
<div class="btn" style="left:519.3px;top:220.25px;width:74.7px;height:12.8px"></div>
<div class="t" style="left:528.08px;top:220.90px;height:14.58px;line-height:14.58px;font-size:9.8px;color:#111;"><span style="display:inline-block;transform:scaleX(0.923);transform-origin:0 50%">Unsigned</span></div>
<svg class="a" style="left:577.02px;top:224.10px" width="6" height="7" viewBox="0 0 6 7"><path d="M3 0.5 V4.2" stroke="#111" stroke-width="1.4"/><path d="M0.7 3.3 L3 6.3 L5.3 3.3 Z" fill="#111"/></svg>
<div class="t" style="left:691.00px;top:219.70px;height:14.58px;line-height:14.58px;font-size:9.8px;color:#000;"><span style="display:inline-block;transform:scaleX(0.979);transform-origin:0 50%">This is the lower threshold velocity for s...ll output signal is enabled, if configured</span></div>
<div class="rrow" style="top:233.08px;background:#f4f4f4"></div>
<div class="a" style="left:395.9px;top:233.08px;width:58.9px;height:14.58px;background:#eaeaea"></div>
<svg class="a" style="left:231.5px;top:236.78px" width="8" height="6" viewBox="0 0 8 6"><path d="M0.9 1.2 L4 4.3 L7.1 1.2" stroke="#3a3a3a" stroke-width="1.2" fill="none"/></svg>
<svg class="a" style="left:245.6px;top:234.48px" width="11" height="11" viewBox="0 0 11 11"><path d="M3.3 1 H8.6 Q9.9 1 9.9 2.3 V8.5 Q9.9 9.8 8.6 9.8 H3.3 L0.9 5.4 Z" fill="#fff" stroke="#1a1a1a" stroke-width="1.25" stroke-linejoin="round"/><path d="M4.6 3.6 L7.6 7.2 M7.6 3.6 L4.6 7.2" stroke="#111" stroke-width="1.15"/><path d="M5.2 5.4 H7" stroke="#111" stroke-width="1.2"/></svg>
<div class="t" style="left:261.80px;top:234.28px;height:14.58px;line-height:14.58px;font-size:9.8px;color:#000;"><span style="display:inline-block;transform:scaleX(0.842);transform-origin:0 50%">SW_MODE</span></div>
<div class="t" style="left:338.60px;top:234.28px;height:14.58px;line-height:14.58px;font-size:9.8px;color:#000;"><span style="display:inline-block;transform:scaleX(0.932);transform-origin:0 50%">0x34</span></div>
<div class="t" style="left:366.60px;width:29.30px;text-align:center;top:234.28px;height:14.58px;line-height:14.58px;font-size:9.8px;color:#000;"><span style="display:inline-block;transform:scaleX(0.834);transform-origin:50% 50%">RW</span></div>
<div class="t" style="left:395.90px;width:58.90px;text-align:center;top:234.28px;height:14.58px;line-height:14.58px;font-size:9.8px;color:#000;"><span style="display:inline-block;transform:scaleX(0.929);transform-origin:50% 50%">32</span></div>
<div class="t" style="left:454.80px;width:63.80px;text-align:center;top:234.28px;height:14.58px;line-height:14.58px;font-size:9.8px;color:#000;"><span style="display:inline-block;transform:scaleX(0.930);transform-origin:50% 50%">0x00000000</span></div>
<div class="btn" style="left:519.3px;top:234.83px;width:74.7px;height:12.8px"></div>
<div class="t" style="left:519.30px;width:74.70px;text-align:center;top:235.48px;height:14.58px;line-height:14.58px;font-size:9.8px;color:#111;"><span style="display:inline-block;transform:scaleX(0.930);transform-origin:50% 50%">0x00000000</span></div>
<svg class="a" style="left:691.5px;top:238.38px" width="4" height="5" viewBox="0 0 4 5"><path d="M0.6 0.8 L3.4 2.5 L0.6 4.2 Z" fill="#111"/></svg>
<div class="t" style="left:698.60px;top:234.28px;height:14.58px;line-height:14.58px;font-size:9.8px;color:#000;"><span style="display:inline-block;transform:scaleX(0.954);transform-origin:0 50%">Switch mode configuration</span></div>
<div class="rrow" style="top:247.66px;background:#fff"></div>
<div class="a" style="left:395.9px;top:247.66px;width:58.9px;height:14.58px;background:#f0f0f0"></div>
<div class="a" style="left:454.8px;top:247.66px;width:140.0px;height:14.58px;background:#dcbfd6"></div>
<div class="t" style="left:260.30px;top:248.86px;height:14.58px;line-height:14.58px;font-size:9.8px;color:#000;"><span style="display:inline-block;transform:scaleX(0.951);transform-origin:0 50%">stop_l_enable</span></div>
<div class="t" style="left:366.60px;width:29.30px;text-align:center;top:248.86px;height:14.58px;line-height:14.58px;font-size:9.8px;color:#000;"><span style="display:inline-block;transform:scaleX(0.834);transform-origin:50% 50%">RW</span></div>
<div class="t mono" style="left:398.6px;top:248.56px;height:14.58px;line-height:14.58px;font-size:10.8px;-webkit-text-stroke:0.3px #1e1e1e;color:#1e1e1e"><span style="display:inline-block;transform:scaleX(0.895);transform-origin:0 50%">0000 0001</span></div>
<div class="cb" style="left:457px;top:250.26px;width:10px;height:9.6px;border-color:#555"></div>
<div class="t" style="left:479.30px;top:248.86px;height:14.58px;line-height:14.58px;font-size:9.8px;color:#000;"><span style="display:inline-block;transform:scaleX(0.944);transform-origin:0 50%">low</span></div>
<div class="cb" style="left:520px;top:250.26px;width:9.8px;height:9.6px;border-color:#555"></div>
<div class="t" style="left:526.50px;width:60.00px;text-align:center;top:248.86px;height:14.58px;line-height:14.58px;font-size:9.8px;color:#000;"><span style="display:inline-block;transform:scaleX(0.973);transform-origin:50% 50%">Set bit 0</span></div>
<div class="rrow" style="top:262.24px;background:#f4f4f4"></div>
<div class="a" style="left:395.9px;top:262.24px;width:58.9px;height:14.58px;background:#eaeaea"></div>
<div class="a" style="left:454.8px;top:262.24px;width:140.0px;height:14.58px;background:#d7b9d0"></div>
<div class="t" style="left:260.30px;top:263.44px;height:14.58px;line-height:14.58px;font-size:9.8px;color:#000;"><span style="display:inline-block;transform:scaleX(0.951);transform-origin:0 50%">stop_r_enable</span></div>
<div class="t" style="left:366.60px;width:29.30px;text-align:center;top:263.44px;height:14.58px;line-height:14.58px;font-size:9.8px;color:#000;"><span style="display:inline-block;transform:scaleX(0.834);transform-origin:50% 50%">RW</span></div>
<div class="t mono" style="left:398.6px;top:263.14px;height:14.58px;line-height:14.58px;font-size:10.8px;-webkit-text-stroke:0.3px #1e1e1e;color:#1e1e1e"><span style="display:inline-block;transform:scaleX(0.895);transform-origin:0 50%">0000 0002</span></div>
<div class="cb" style="left:457px;top:264.84px;width:10px;height:9.6px;border-color:#555"></div>
<div class="t" style="left:479.30px;top:263.44px;height:14.58px;line-height:14.58px;font-size:9.8px;color:#000;"><span style="display:inline-block;transform:scaleX(0.944);transform-origin:0 50%">low</span></div>
<div class="cb" style="left:520px;top:264.84px;width:9.8px;height:9.6px;border-color:#555"></div>
<div class="t" style="left:526.50px;width:60.00px;text-align:center;top:263.44px;height:14.58px;line-height:14.58px;font-size:9.8px;color:#000;"><span style="display:inline-block;transform:scaleX(0.973);transform-origin:50% 50%">Set bit 1</span></div>
<div class="rrow" style="top:276.82px;background:#fff"></div>
<div class="a" style="left:395.9px;top:276.82px;width:58.9px;height:14.58px;background:#f0f0f0"></div>
<div class="a" style="left:454.8px;top:276.82px;width:140.0px;height:14.58px;background:#dcbfd6"></div>
<div class="t" style="left:260.30px;top:278.02px;height:14.58px;line-height:14.58px;font-size:9.8px;color:#000;"><span style="display:inline-block;transform:scaleX(0.953);transform-origin:0 50%">pol_stop_l</span></div>
<div class="t" style="left:366.60px;width:29.30px;text-align:center;top:278.02px;height:14.58px;line-height:14.58px;font-size:9.8px;color:#000;"><span style="display:inline-block;transform:scaleX(0.834);transform-origin:50% 50%">RW</span></div>
<div class="t mono" style="left:398.6px;top:277.72px;height:14.58px;line-height:14.58px;font-size:10.8px;-webkit-text-stroke:0.3px #1e1e1e;color:#1e1e1e"><span style="display:inline-block;transform:scaleX(0.895);transform-origin:0 50%">0000 0004</span></div>
<div class="cb" style="left:457px;top:279.42px;width:10px;height:9.6px;border-color:#555"></div>
<div class="t" style="left:479.30px;top:278.02px;height:14.58px;line-height:14.58px;font-size:9.8px;color:#000;"><span style="display:inline-block;transform:scaleX(0.944);transform-origin:0 50%">low</span></div>
<div class="cb" style="left:520px;top:279.42px;width:9.8px;height:9.6px;border-color:#555"></div>
<div class="t" style="left:526.50px;width:60.00px;text-align:center;top:278.02px;height:14.58px;line-height:14.58px;font-size:9.8px;color:#000;"><span style="display:inline-block;transform:scaleX(0.973);transform-origin:50% 50%">Set bit 2</span></div>
<div class="t" style="left:597.50px;top:278.02px;height:14.58px;line-height:14.58px;font-size:9.8px;color:#000;"><span style="display:inline-block;transform:scaleX(0.965);transform-origin:0 50%">non-inver...the motor</span></div>
<div class="t" style="left:691.00px;top:278.02px;height:14.58px;line-height:14.58px;font-size:9.8px;color:#000;"><span style="display:inline-block;transform:scaleX(0.977);transform-origin:0 50%">Sets the active polarity of the left reference switch input</span></div>
<div class="rrow" style="top:291.40px;background:#f4f4f4"></div>
<div class="a" style="left:395.9px;top:291.40px;width:58.9px;height:14.58px;background:#eaeaea"></div>
<div class="a" style="left:454.8px;top:291.40px;width:140.0px;height:14.58px;background:#d7b9d0"></div>
<div class="t" style="left:260.30px;top:292.60px;height:14.58px;line-height:14.58px;font-size:9.8px;color:#000;"><span style="display:inline-block;transform:scaleX(0.953);transform-origin:0 50%">pol_stop_r</span></div>
<div class="t" style="left:366.60px;width:29.30px;text-align:center;top:292.60px;height:14.58px;line-height:14.58px;font-size:9.8px;color:#000;"><span style="display:inline-block;transform:scaleX(0.834);transform-origin:50% 50%">RW</span></div>
<div class="t mono" style="left:398.6px;top:292.30px;height:14.58px;line-height:14.58px;font-size:10.8px;-webkit-text-stroke:0.3px #1e1e1e;color:#1e1e1e"><span style="display:inline-block;transform:scaleX(0.895);transform-origin:0 50%">0000 0008</span></div>
<div class="cb" style="left:457px;top:294.00px;width:10px;height:9.6px;border-color:#555"></div>
<div class="t" style="left:479.30px;top:292.60px;height:14.58px;line-height:14.58px;font-size:9.8px;color:#000;"><span style="display:inline-block;transform:scaleX(0.944);transform-origin:0 50%">low</span></div>
<div class="cb" style="left:520px;top:294.00px;width:9.8px;height:9.6px;border-color:#555"></div>
<div class="t" style="left:526.50px;width:60.00px;text-align:center;top:292.60px;height:14.58px;line-height:14.58px;font-size:9.8px;color:#000;"><span style="display:inline-block;transform:scaleX(0.973);transform-origin:50% 50%">Set bit 3</span></div>
<div class="t" style="left:597.50px;top:292.60px;height:14.58px;line-height:14.58px;font-size:9.8px;color:#000;"><span style="display:inline-block;transform:scaleX(0.965);transform-origin:0 50%">non-inver...the motor</span></div>
<div class="t" style="left:691.00px;top:292.60px;height:14.58px;line-height:14.58px;font-size:9.8px;color:#000;"><span style="display:inline-block;transform:scaleX(0.976);transform-origin:0 50%">Sets the active polarity of the right reference switch input</span></div>
<div class="rrow" style="top:305.98px;background:#fff"></div>
<div class="a" style="left:395.9px;top:305.98px;width:58.9px;height:14.58px;background:#f0f0f0"></div>
<div class="a" style="left:454.8px;top:305.98px;width:140.0px;height:14.58px;background:#dcbfd6"></div>
<div class="t" style="left:260.30px;top:307.18px;height:14.58px;line-height:14.58px;font-size:9.8px;color:#000;"><span style="display:inline-block;transform:scaleX(0.950);transform-origin:0 50%">swap_lr</span></div>
<div class="t" style="left:366.60px;width:29.30px;text-align:center;top:307.18px;height:14.58px;line-height:14.58px;font-size:9.8px;color:#000;"><span style="display:inline-block;transform:scaleX(0.834);transform-origin:50% 50%">RW</span></div>
<div class="t mono" style="left:398.6px;top:306.88px;height:14.58px;line-height:14.58px;font-size:10.8px;-webkit-text-stroke:0.3px #1e1e1e;color:#1e1e1e"><span style="display:inline-block;transform:scaleX(0.895);transform-origin:0 50%">0000 0010</span></div>
<div class="cb" style="left:457px;top:308.58px;width:10px;height:9.6px;border-color:#555"></div>
<div class="t" style="left:479.30px;top:307.18px;height:14.58px;line-height:14.58px;font-size:9.8px;color:#000;"><span style="display:inline-block;transform:scaleX(0.944);transform-origin:0 50%">low</span></div>
<div class="cb" style="left:520px;top:308.58px;width:9.8px;height:9.6px;border-color:#555"></div>
<div class="t" style="left:526.50px;width:60.00px;text-align:center;top:307.18px;height:14.58px;line-height:14.58px;font-size:9.8px;color:#000;"><span style="display:inline-block;transform:scaleX(0.973);transform-origin:50% 50%">Set bit 4</span></div>
<div class="rrow" style="top:320.56px;background:#f4f4f4"></div>
<div class="a" style="left:395.9px;top:320.56px;width:58.9px;height:14.58px;background:#eaeaea"></div>
<div class="a" style="left:454.8px;top:320.56px;width:140.0px;height:14.58px;background:#d7b9d0"></div>
<div class="t" style="left:260.30px;top:321.76px;height:14.58px;line-height:14.58px;font-size:9.8px;color:#000;"><span style="display:inline-block;transform:scaleX(0.951);transform-origin:0 50%">latch_l_active</span></div>
<div class="t" style="left:366.60px;width:29.30px;text-align:center;top:321.76px;height:14.58px;line-height:14.58px;font-size:9.8px;color:#000;"><span style="display:inline-block;transform:scaleX(0.834);transform-origin:50% 50%">RW</span></div>
<div class="t mono" style="left:398.6px;top:321.46px;height:14.58px;line-height:14.58px;font-size:10.8px;-webkit-text-stroke:0.3px #1e1e1e;color:#1e1e1e"><span style="display:inline-block;transform:scaleX(0.895);transform-origin:0 50%">0000 0020</span></div>
<div class="cb" style="left:457px;top:323.16px;width:10px;height:9.6px;border-color:#555"></div>
<div class="t" style="left:479.30px;top:321.76px;height:14.58px;line-height:14.58px;font-size:9.8px;color:#000;"><span style="display:inline-block;transform:scaleX(0.944);transform-origin:0 50%">low</span></div>
<div class="cb" style="left:520px;top:323.16px;width:9.8px;height:9.6px;border-color:#555"></div>
<div class="t" style="left:526.50px;width:60.00px;text-align:center;top:321.76px;height:14.58px;line-height:14.58px;font-size:9.8px;color:#000;"><span style="display:inline-block;transform:scaleX(0.973);transform-origin:50% 50%">Set bit 5</span></div>
<div class="rrow" style="top:335.14px;background:#fff"></div>
<div class="a" style="left:395.9px;top:335.14px;width:58.9px;height:14.58px;background:#f0f0f0"></div>
<div class="a" style="left:454.8px;top:335.14px;width:140.0px;height:14.58px;background:#dcbfd6"></div>
<div class="t" style="left:260.30px;top:336.34px;height:14.58px;line-height:14.58px;font-size:9.8px;color:#000;"><span style="display:inline-block;transform:scaleX(0.950);transform-origin:0 50%">latch_l_inactive</span></div>
<div class="t" style="left:366.60px;width:29.30px;text-align:center;top:336.34px;height:14.58px;line-height:14.58px;font-size:9.8px;color:#000;"><span style="display:inline-block;transform:scaleX(0.834);transform-origin:50% 50%">RW</span></div>
<div class="t mono" style="left:398.6px;top:336.04px;height:14.58px;line-height:14.58px;font-size:10.8px;-webkit-text-stroke:0.3px #1e1e1e;color:#1e1e1e"><span style="display:inline-block;transform:scaleX(0.895);transform-origin:0 50%">0000 0040</span></div>
<div class="cb" style="left:457px;top:337.74px;width:10px;height:9.6px;border-color:#555"></div>
<div class="t" style="left:479.30px;top:336.34px;height:14.58px;line-height:14.58px;font-size:9.8px;color:#000;"><span style="display:inline-block;transform:scaleX(0.944);transform-origin:0 50%">low</span></div>
<div class="cb" style="left:520px;top:337.74px;width:9.8px;height:9.6px;border-color:#555"></div>
<div class="t" style="left:526.50px;width:60.00px;text-align:center;top:336.34px;height:14.58px;line-height:14.58px;font-size:9.8px;color:#000;"><span style="display:inline-block;transform:scaleX(0.973);transform-origin:50% 50%">Set bit 6</span></div>
<div class="rrow" style="top:349.72px;background:#f4f4f4"></div>
<div class="a" style="left:395.9px;top:349.72px;width:58.9px;height:14.58px;background:#eaeaea"></div>
<div class="a" style="left:454.8px;top:349.72px;width:140.0px;height:14.58px;background:#d7b9d0"></div>
<div class="t" style="left:260.30px;top:350.92px;height:14.58px;line-height:14.58px;font-size:9.8px;color:#000;"><span style="display:inline-block;transform:scaleX(0.951);transform-origin:0 50%">latch_r_active</span></div>
<div class="t" style="left:366.60px;width:29.30px;text-align:center;top:350.92px;height:14.58px;line-height:14.58px;font-size:9.8px;color:#000;"><span style="display:inline-block;transform:scaleX(0.834);transform-origin:50% 50%">RW</span></div>
<div class="t mono" style="left:398.6px;top:350.62px;height:14.58px;line-height:14.58px;font-size:10.8px;-webkit-text-stroke:0.3px #1e1e1e;color:#1e1e1e"><span style="display:inline-block;transform:scaleX(0.895);transform-origin:0 50%">0000 0080</span></div>
<div class="cb" style="left:457px;top:352.32px;width:10px;height:9.6px;border-color:#555"></div>
<div class="t" style="left:479.30px;top:350.92px;height:14.58px;line-height:14.58px;font-size:9.8px;color:#000;"><span style="display:inline-block;transform:scaleX(0.944);transform-origin:0 50%">low</span></div>
<div class="cb" style="left:520px;top:352.32px;width:9.8px;height:9.6px;border-color:#555"></div>
<div class="t" style="left:526.50px;width:60.00px;text-align:center;top:350.92px;height:14.58px;line-height:14.58px;font-size:9.8px;color:#000;"><span style="display:inline-block;transform:scaleX(0.973);transform-origin:50% 50%">Set bit 7</span></div>
<div class="rrow" style="top:364.30px;background:#fff"></div>
<div class="a" style="left:395.9px;top:364.30px;width:58.9px;height:14.58px;background:#f0f0f0"></div>
<div class="a" style="left:454.8px;top:364.30px;width:140.0px;height:14.58px;background:#dcbfd6"></div>
<div class="t" style="left:260.30px;top:365.50px;height:14.58px;line-height:14.58px;font-size:9.8px;color:#000;"><span style="display:inline-block;transform:scaleX(0.950);transform-origin:0 50%">latch_r_inactive</span></div>
<div class="t" style="left:366.60px;width:29.30px;text-align:center;top:365.50px;height:14.58px;line-height:14.58px;font-size:9.8px;color:#000;"><span style="display:inline-block;transform:scaleX(0.834);transform-origin:50% 50%">RW</span></div>
<div class="t mono" style="left:398.6px;top:365.20px;height:14.58px;line-height:14.58px;font-size:10.8px;-webkit-text-stroke:0.3px #1e1e1e;color:#1e1e1e"><span style="display:inline-block;transform:scaleX(0.895);transform-origin:0 50%">0000 0100</span></div>
<div class="cb" style="left:457px;top:366.90px;width:10px;height:9.6px;border-color:#555"></div>
<div class="t" style="left:479.30px;top:365.50px;height:14.58px;line-height:14.58px;font-size:9.8px;color:#000;"><span style="display:inline-block;transform:scaleX(0.944);transform-origin:0 50%">low</span></div>
<div class="cb" style="left:520px;top:366.90px;width:9.8px;height:9.6px;border-color:#555"></div>
<div class="t" style="left:526.50px;width:60.00px;text-align:center;top:365.50px;height:14.58px;line-height:14.58px;font-size:9.8px;color:#000;"><span style="display:inline-block;transform:scaleX(0.973);transform-origin:50% 50%">Set bit 8</span></div>
<div class="rrow" style="top:378.88px;background:#f4f4f4"></div>
<div class="a" style="left:395.9px;top:378.88px;width:58.9px;height:14.58px;background:#eaeaea"></div>
<div class="a" style="left:454.8px;top:378.88px;width:140.0px;height:14.58px;background:#d7b9d0"></div>
<div class="t" style="left:260.30px;top:380.08px;height:14.58px;line-height:14.58px;font-size:9.8px;color:#000;"><span style="display:inline-block;transform:scaleX(0.949);transform-origin:0 50%">en_latch_encoder</span></div>
<div class="t" style="left:366.60px;width:29.30px;text-align:center;top:380.08px;height:14.58px;line-height:14.58px;font-size:9.8px;color:#000;"><span style="display:inline-block;transform:scaleX(0.834);transform-origin:50% 50%">RW</span></div>
<div class="t mono" style="left:398.6px;top:379.78px;height:14.58px;line-height:14.58px;font-size:10.8px;-webkit-text-stroke:0.3px #1e1e1e;color:#1e1e1e"><span style="display:inline-block;transform:scaleX(0.895);transform-origin:0 50%">0000 0200</span></div>
<div class="cb" style="left:457px;top:381.48px;width:10px;height:9.6px;border-color:#555"></div>
<div class="t" style="left:479.30px;top:380.08px;height:14.58px;line-height:14.58px;font-size:9.8px;color:#000;"><span style="display:inline-block;transform:scaleX(0.944);transform-origin:0 50%">low</span></div>
<div class="cb" style="left:520px;top:381.48px;width:9.8px;height:9.6px;border-color:#555"></div>
<div class="t" style="left:526.50px;width:60.00px;text-align:center;top:380.08px;height:14.58px;line-height:14.58px;font-size:9.8px;color:#000;"><span style="display:inline-block;transform:scaleX(0.973);transform-origin:50% 50%">Set bit 9</span></div>
<div class="rrow" style="top:393.46px;background:#fff"></div>
<div class="a" style="left:395.9px;top:393.46px;width:58.9px;height:14.58px;background:#f0f0f0"></div>
<div class="a" style="left:454.8px;top:393.46px;width:140.0px;height:14.58px;background:#dcbfd6"></div>
<div class="a" style="left:257.6px;top:393.46px;width:783.9px;height:14.58px;background:linear-gradient(#5585e6,#6892ea 18%,#5a94ee 45%,#3d8ef4 75%,#1485fb)"></div>
<div class="a" style="left:257.6px;top:393.46px;width:78.4px;height:14.58px;border:1px solid #24334a"></div>
<div class="t" style="left:260.30px;top:394.66px;height:14.58px;line-height:14.58px;font-size:9.8px;color:#e3e060;"><span style="display:inline-block;transform:scaleX(0.950);transform-origin:0 50%">sg_stop</span></div>
<div class="t" style="left:366.60px;width:29.30px;text-align:center;top:394.66px;height:14.58px;line-height:14.58px;font-size:9.8px;color:#e3e060;"><span style="display:inline-block;transform:scaleX(0.834);transform-origin:50% 50%">RW</span></div>
<div class="t mono" style="left:398.6px;top:394.36px;height:14.58px;line-height:14.58px;font-size:10.8px;-webkit-text-stroke:0.3px #e3e060;color:#e3e060"><span style="display:inline-block;transform:scaleX(0.895);transform-origin:0 50%">0000 0400</span></div>
<div class="cb" style="left:457px;top:396.06px;width:10px;height:9.6px;border-color:#555"></div>
<div class="t" style="left:479.30px;top:394.66px;height:14.58px;line-height:14.58px;font-size:9.8px;color:#e3e060;"><span style="display:inline-block;transform:scaleX(0.944);transform-origin:0 50%">low</span></div>
<div class="cb" style="left:520px;top:396.06px;width:9.8px;height:9.6px;border-color:#555"></div>
<div class="t" style="left:526.50px;width:60.00px;text-align:center;top:394.66px;height:14.58px;line-height:14.58px;font-size:9.8px;color:#e3e060;"><span style="display:inline-block;transform:scaleX(0.967);transform-origin:50% 50%">Set bit 10</span></div>
<div class="rrow" style="top:408.04px;background:#f4f4f4"></div>
<div class="a" style="left:395.9px;top:408.04px;width:58.9px;height:14.58px;background:#eaeaea"></div>
<div class="a" style="left:454.8px;top:408.04px;width:140.0px;height:14.58px;background:#d7b9d0"></div>
<div class="t" style="left:260.30px;top:409.24px;height:14.58px;line-height:14.58px;font-size:9.8px;color:#000;"><span style="display:inline-block;transform:scaleX(0.948);transform-origin:0 50%">en_softstop</span></div>
<div class="t" style="left:366.60px;width:29.30px;text-align:center;top:409.24px;height:14.58px;line-height:14.58px;font-size:9.8px;color:#000;"><span style="display:inline-block;transform:scaleX(0.834);transform-origin:50% 50%">RW</span></div>
<div class="t mono" style="left:398.6px;top:408.94px;height:14.58px;line-height:14.58px;font-size:10.8px;-webkit-text-stroke:0.3px #1e1e1e;color:#1e1e1e"><span style="display:inline-block;transform:scaleX(0.895);transform-origin:0 50%">0000 0800</span></div>
<div class="cb" style="left:457px;top:410.64px;width:10px;height:9.6px;border-color:#555"></div>
<div class="t" style="left:479.30px;top:409.24px;height:14.58px;line-height:14.58px;font-size:9.8px;color:#000;"><span style="display:inline-block;transform:scaleX(0.944);transform-origin:0 50%">low</span></div>
<div class="cb" style="left:520px;top:410.64px;width:9.8px;height:9.6px;border-color:#555"></div>
<div class="t" style="left:526.50px;width:60.00px;text-align:center;top:409.24px;height:14.58px;line-height:14.58px;font-size:9.8px;color:#000;"><span style="display:inline-block;transform:scaleX(0.985);transform-origin:50% 50%">Set bit 11</span></div>
<div class="t" style="left:597.50px;top:409.24px;height:14.58px;line-height:14.58px;font-size:9.8px;color:#000;"><span style="display:inline-block;transform:scaleX(0.947);transform-origin:0 50%">Hard stop</span></div>
<div class="t" style="left:691.00px;top:409.24px;height:14.58px;line-height:14.58px;font-size:9.8px;color:#000;"><span style="display:inline-block;transform:scaleX(0.972);transform-origin:0 50%">The soft stop mode always uses the decel...ft stop in combination with stallGuard2.</span></div>
<div class="rrow" style="top:422.62px;background:#fff"></div>
<div class="a" style="left:395.9px;top:422.62px;width:58.9px;height:14.58px;background:#f0f0f0"></div>
<svg class="a" style="left:231.5px;top:426.32px" width="8" height="6" viewBox="0 0 8 6"><path d="M0.9 1.2 L4 4.3 L7.1 1.2" stroke="#3a3a3a" stroke-width="1.2" fill="none"/></svg>
<svg class="a" style="left:245.6px;top:424.02px" width="11" height="11" viewBox="0 0 11 11"><path d="M3.3 1 H8.6 Q9.9 1 9.9 2.3 V8.5 Q9.9 9.8 8.6 9.8 H3.3 L0.9 5.4 Z" fill="#fff" stroke="#1a1a1a" stroke-width="1.25" stroke-linejoin="round"/><path d="M4.6 3.6 L7.6 7.2 M7.6 3.6 L4.6 7.2" stroke="#111" stroke-width="1.15"/><path d="M5.2 5.4 H7" stroke="#111" stroke-width="1.2"/></svg>
<div class="t" style="left:261.80px;top:423.82px;height:14.58px;line-height:14.58px;font-size:9.8px;color:#000;"><span style="display:inline-block;transform:scaleX(0.824);transform-origin:0 50%">COOLCONF</span></div>
<div class="t" style="left:338.60px;top:423.82px;height:14.58px;line-height:14.58px;font-size:9.8px;color:#000;"><span style="display:inline-block;transform:scaleX(0.900);transform-origin:0 50%">0x6D</span></div>
<div class="t" style="left:366.60px;width:29.30px;text-align:center;top:423.82px;height:14.58px;line-height:14.58px;font-size:9.8px;color:#000;"><span style="display:inline-block;transform:scaleX(0.824);transform-origin:50% 50%">W</span></div>
<div class="t" style="left:395.90px;width:58.90px;text-align:center;top:423.82px;height:14.58px;line-height:14.58px;font-size:9.8px;color:#000;"><span style="display:inline-block;transform:scaleX(0.929);transform-origin:50% 50%">32</span></div>
<div class="t" style="left:454.80px;width:63.80px;text-align:center;top:423.82px;height:14.58px;line-height:14.58px;font-size:9.8px;color:#000;"><span style="display:inline-block;transform:scaleX(0.930);transform-origin:50% 50%">0x00000000</span></div>
<div class="btn" style="left:519.3px;top:424.37px;width:74.7px;height:12.8px"></div>
<div class="t" style="left:519.30px;width:74.70px;text-align:center;top:425.02px;height:14.58px;line-height:14.58px;font-size:9.8px;color:#111;"><span style="display:inline-block;transform:scaleX(0.930);transform-origin:50% 50%">0x00000000</span></div>
<div class="rrow" style="top:437.20px;background:#f4f4f4"></div>
<div class="a" style="left:395.9px;top:437.20px;width:58.9px;height:14.58px;background:#eaeaea"></div>
<div class="t" style="left:260.30px;top:438.40px;height:14.58px;line-height:14.58px;font-size:9.8px;color:#000;"><span style="display:inline-block;transform:scaleX(0.944);transform-origin:0 50%">semin</span></div>
<div class="t" style="left:366.60px;width:29.30px;text-align:center;top:438.40px;height:14.58px;line-height:14.58px;font-size:9.8px;color:#000;"><span style="display:inline-block;transform:scaleX(0.824);transform-origin:50% 50%">W</span></div>
<div class="t mono" style="left:398.6px;top:438.10px;height:14.58px;line-height:14.58px;font-size:10.8px;-webkit-text-stroke:0.3px #1e1e1e;color:#1e1e1e"><span style="display:inline-block;transform:scaleX(0.895);transform-origin:0 50%">0000 000F</span></div>
<div class="t" style="left:454.80px;width:63.80px;text-align:center;top:438.40px;height:14.58px;line-height:14.58px;font-size:9.8px;color:#000;"><span style="display:inline-block;transform:scaleX(0.929);transform-origin:50% 50%">0</span></div>
<div class="btn" style="left:519.3px;top:438.95px;width:74.7px;height:12.8px"></div>
<div class="t" style="left:528.08px;top:439.60px;height:14.58px;line-height:14.58px;font-size:9.8px;color:#111;"><span style="display:inline-block;transform:scaleX(0.923);transform-origin:0 50%">Unsigned</span></div>
<svg class="a" style="left:577.02px;top:442.80px" width="6" height="7" viewBox="0 0 6 7"><path d="M3 0.5 V4.2" stroke="#111" stroke-width="1.4"/><path d="M0.7 3.3 L3 6.3 L5.3 3.3 Z" fill="#111"/></svg>
<div class="t" style="left:691.00px;top:438.40px;height:14.58px;line-height:14.58px;font-size:9.8px;color:#000;"><span style="display:inline-block;transform:scaleX(0.970);transform-origin:0 50%">minimum stallGuard2 value - If the stallG...le. 0: smart current control coolStep off</span></div>
<div class="rrow" style="top:451.78px;background:#fff"></div>
<div class="a" style="left:395.9px;top:451.78px;width:58.9px;height:14.58px;background:#f0f0f0"></div>
<div class="a" style="left:454.8px;top:451.78px;width:63.8px;height:14.58px;background:#f2efc8"></div>
<div class="t" style="left:260.30px;top:452.98px;height:14.58px;line-height:14.58px;font-size:9.8px;color:#000;"><span style="display:inline-block;transform:scaleX(0.944);transform-origin:0 50%">seup</span></div>
<div class="t" style="left:366.60px;width:29.30px;text-align:center;top:452.98px;height:14.58px;line-height:14.58px;font-size:9.8px;color:#000;"><span style="display:inline-block;transform:scaleX(0.824);transform-origin:50% 50%">W</span></div>
<div class="t mono" style="left:398.6px;top:452.68px;height:14.58px;line-height:14.58px;font-size:10.8px;-webkit-text-stroke:0.3px #1e1e1e;color:#1e1e1e"><span style="display:inline-block;transform:scaleX(0.895);transform-origin:0 50%">0000 0060</span></div>
<div class="t" style="left:454.80px;width:63.80px;text-align:center;top:452.98px;height:14.58px;line-height:14.58px;font-size:9.8px;color:#000;"><span style="display:inline-block;transform:scaleX(0.997);transform-origin:50% 50%">id: 0</span></div>
<div class="btn" style="left:519.3px;top:453.53px;width:74.7px;height:12.8px"></div>
<div class="t" style="left:533.23px;top:454.18px;height:14.58px;line-height:14.58px;font-size:9.8px;color:#111;"><span style="display:inline-block;transform:scaleX(0.916);transform-origin:0 50%">Choice</span></div>
<svg class="a" style="left:571.87px;top:457.38px" width="6" height="7" viewBox="0 0 6 7"><path d="M3 0.5 V4.2" stroke="#111" stroke-width="1.4"/><path d="M0.7 3.3 L3 6.3 L5.3 3.3 Z" fill="#111"/></svg>
<div class="t" style="left:597.50px;top:452.98px;height:14.58px;line-height:14.58px;font-size:9.8px;color:#000;"><span style="display:inline-block;transform:scaleX(0.929);transform-origin:0 50%">1</span></div>
<div class="t" style="left:691.00px;top:452.98px;height:14.58px;line-height:14.58px;font-size:9.8px;color:#000;"><span style="display:inline-block;transform:scaleX(0.960);transform-origin:0 50%">Current increment steps per measured stallGuard2 value</span></div>
<div class="rrow" style="top:466.36px;background:#f4f4f4"></div>
<div class="a" style="left:395.9px;top:466.36px;width:58.9px;height:14.58px;background:#eaeaea"></div>
<div class="t" style="left:260.30px;top:467.56px;height:14.58px;line-height:14.58px;font-size:9.8px;color:#000;"><span style="display:inline-block;transform:scaleX(0.944);transform-origin:0 50%">semax</span></div>
<div class="t" style="left:366.60px;width:29.30px;text-align:center;top:467.56px;height:14.58px;line-height:14.58px;font-size:9.8px;color:#000;"><span style="display:inline-block;transform:scaleX(0.824);transform-origin:50% 50%">W</span></div>
<div class="t mono" style="left:398.6px;top:467.26px;height:14.58px;line-height:14.58px;font-size:10.8px;-webkit-text-stroke:0.3px #1e1e1e;color:#1e1e1e"><span style="display:inline-block;transform:scaleX(0.895);transform-origin:0 50%">0000 0F00</span></div>
<div class="t" style="left:454.80px;width:63.80px;text-align:center;top:467.56px;height:14.58px;line-height:14.58px;font-size:9.8px;color:#000;"><span style="display:inline-block;transform:scaleX(0.929);transform-origin:50% 50%">0</span></div>
<div class="btn" style="left:519.3px;top:468.11px;width:74.7px;height:12.8px"></div>
<div class="t" style="left:528.08px;top:468.76px;height:14.58px;line-height:14.58px;font-size:9.8px;color:#111;"><span style="display:inline-block;transform:scaleX(0.923);transform-origin:0 50%">Unsigned</span></div>
<svg class="a" style="left:577.02px;top:471.96px" width="6" height="7" viewBox="0 0 6 7"><path d="M3 0.5 V4.2" stroke="#111" stroke-width="1.4"/><path d="M0.7 3.3 L3 6.3 L5.3 3.3 Z" fill="#111"/></svg>
<div class="t" style="left:691.00px;top:467.56px;height:14.58px;line-height:14.58px;font-size:9.8px;color:#000;"><span style="display:inline-block;transform:scaleX(0.973);transform-origin:0 50%">stallGuard2 hysteresis value - If the st...urrent becomes decreased to save energy.</span></div>
<div class="rrow" style="top:480.94px;background:#fff"></div>
<div class="a" style="left:395.9px;top:480.94px;width:58.9px;height:14.58px;background:#f0f0f0"></div>
<div class="a" style="left:454.8px;top:480.94px;width:63.8px;height:14.58px;background:#f2efc8"></div>
<div class="t" style="left:260.30px;top:482.14px;height:14.58px;line-height:14.58px;font-size:9.8px;color:#000;"><span style="display:inline-block;transform:scaleX(0.944);transform-origin:0 50%">sedn</span></div>
<div class="t" style="left:366.60px;width:29.30px;text-align:center;top:482.14px;height:14.58px;line-height:14.58px;font-size:9.8px;color:#000;"><span style="display:inline-block;transform:scaleX(0.824);transform-origin:50% 50%">W</span></div>
<div class="t mono" style="left:398.6px;top:481.84px;height:14.58px;line-height:14.58px;font-size:10.8px;-webkit-text-stroke:0.3px #1e1e1e;color:#1e1e1e"><span style="display:inline-block;transform:scaleX(0.895);transform-origin:0 50%">0000 6000</span></div>
<div class="t" style="left:454.80px;width:63.80px;text-align:center;top:482.14px;height:14.58px;line-height:14.58px;font-size:9.8px;color:#000;"><span style="display:inline-block;transform:scaleX(0.997);transform-origin:50% 50%">id: 0</span></div>
<div class="btn" style="left:519.3px;top:482.69px;width:74.7px;height:12.8px"></div>
<div class="t" style="left:533.23px;top:483.34px;height:14.58px;line-height:14.58px;font-size:9.8px;color:#111;"><span style="display:inline-block;transform:scaleX(0.916);transform-origin:0 50%">Choice</span></div>
<svg class="a" style="left:571.87px;top:486.54px" width="6" height="7" viewBox="0 0 6 7"><path d="M3 0.5 V4.2" stroke="#111" stroke-width="1.4"/><path d="M0.7 3.3 L3 6.3 L5.3 3.3 Z" fill="#111"/></svg>
<div class="t" style="left:597.50px;top:482.14px;height:14.58px;line-height:14.58px;font-size:9.8px;color:#000;"><span style="display:inline-block;transform:scaleX(0.946);transform-origin:0 50%">n=32</span></div>
<div class="t" style="left:691.00px;top:482.14px;height:14.58px;line-height:14.58px;font-size:9.8px;color:#000;"><span style="display:inline-block;transform:scaleX(0.969);transform-origin:0 50%">Current down step speed; For each n stallGuard2 values decrease by one</span></div>
<div class="rrow" style="top:495.52px;background:#f4f4f4"></div>
<div class="a" style="left:395.9px;top:495.52px;width:58.9px;height:14.58px;background:#eaeaea"></div>
<div class="a" style="left:454.8px;top:495.52px;width:63.8px;height:14.58px;background:#ebe8c0"></div>
<div class="t" style="left:260.30px;top:496.72px;height:14.58px;line-height:14.58px;font-size:9.8px;color:#000;"><span style="display:inline-block;transform:scaleX(0.944);transform-origin:0 50%">seimin</span></div>
<div class="t" style="left:366.60px;width:29.30px;text-align:center;top:496.72px;height:14.58px;line-height:14.58px;font-size:9.8px;color:#000;"><span style="display:inline-block;transform:scaleX(0.824);transform-origin:50% 50%">W</span></div>
<div class="t mono" style="left:398.6px;top:496.42px;height:14.58px;line-height:14.58px;font-size:10.8px;-webkit-text-stroke:0.3px #1e1e1e;color:#1e1e1e"><span style="display:inline-block;transform:scaleX(0.895);transform-origin:0 50%">0000 8000</span></div>
<div class="t" style="left:454.80px;width:63.80px;text-align:center;top:496.72px;height:14.58px;line-height:14.58px;font-size:9.8px;color:#000;"><span style="display:inline-block;transform:scaleX(0.997);transform-origin:50% 50%">id: 0</span></div>
<div class="btn" style="left:519.3px;top:497.27px;width:74.7px;height:12.8px"></div>
<div class="t" style="left:533.23px;top:497.92px;height:14.58px;line-height:14.58px;font-size:9.8px;color:#111;"><span style="display:inline-block;transform:scaleX(0.916);transform-origin:0 50%">Choice</span></div>
<svg class="a" style="left:571.87px;top:501.12px" width="6" height="7" viewBox="0 0 6 7"><path d="M3 0.5 V4.2" stroke="#111" stroke-width="1.4"/><path d="M0.7 3.3 L3 6.3 L5.3 3.3 Z" fill="#111"/></svg>
<div class="t" style="left:597.50px;top:496.72px;height:14.58px;line-height:14.58px;font-size:9.8px;color:#000;"><span style="display:inline-block;transform:scaleX(0.975);transform-origin:0 50%">1/2 of current setting</span></div>
<div class="t" style="left:691.00px;top:496.72px;height:14.58px;line-height:14.58px;font-size:9.8px;color:#000;"><span style="display:inline-block;transform:scaleX(0.971);transform-origin:0 50%">minimum current for smart current control</span></div>
<div class="rrow" style="top:510.10px;background:#fff"></div>
<div class="a" style="left:395.9px;top:510.10px;width:58.9px;height:14.58px;background:#f0f0f0"></div>
<div class="a" style="left:257.8px;top:510.10px;width:783.7px;height:14.58px;background:#e4f0fb"></div>
<div class="a" style="left:395.9px;top:510.10px;width:58.9px;height:14.58px;background:#dde8f2"></div>
<div class="t" style="left:260.30px;top:511.30px;height:14.58px;line-height:14.58px;font-size:9.8px;color:#000;"><span style="display:inline-block;transform:scaleX(0.944);transform-origin:0 50%">sgt</span></div>
<div class="t" style="left:366.60px;width:29.30px;text-align:center;top:511.30px;height:14.58px;line-height:14.58px;font-size:9.8px;color:#000;"><span style="display:inline-block;transform:scaleX(0.824);transform-origin:50% 50%">W</span></div>
<div class="t mono" style="left:398.6px;top:511.00px;height:14.58px;line-height:14.58px;font-size:10.8px;-webkit-text-stroke:0.3px #1e1e1e;color:#1e1e1e"><span style="display:inline-block;transform:scaleX(0.895);transform-origin:0 50%">007F 0000</span></div>
<div class="t" style="left:454.80px;width:63.80px;text-align:center;top:511.30px;height:14.58px;line-height:14.58px;font-size:9.8px;color:#000;"><span style="display:inline-block;transform:scaleX(0.929);transform-origin:50% 50%">0</span></div>
<div class="btn bblue" style="left:519.3px;top:511.85px;width:74.7px;height:12.8px"></div>
<div class="t" style="left:533.19px;top:512.50px;height:14.58px;line-height:14.58px;font-size:9.8px;color:#111;"><span style="display:inline-block;transform:scaleX(0.918);transform-origin:0 50%">Signed</span></div>
<svg class="a" style="left:571.91px;top:515.70px" width="6" height="7" viewBox="0 0 6 7"><path d="M3 0.5 V4.2" stroke="#111" stroke-width="1.4"/><path d="M0.7 3.3 L3 6.3 L5.3 3.3 Z" fill="#111"/></svg>
<div class="t" style="left:691.00px;top:511.30px;height:14.58px;line-height:14.58px;font-size:9.8px;color:#000;"><span style="display:inline-block;transform:scaleX(0.972);transform-origin:0 50%">stallGuard2 threshold value This signed v...requires more torque to indicate a stall.</span></div>
<div class="rrow" style="top:524.68px;background:#f4f4f4"></div>
<div class="a" style="left:395.9px;top:524.68px;width:58.9px;height:14.58px;background:#eaeaea"></div>
<div class="a" style="left:454.8px;top:524.68px;width:63.8px;height:14.58px;background:#ebe8c0"></div>
<div class="t" style="left:260.30px;top:525.88px;height:14.58px;line-height:14.58px;font-size:9.8px;color:#000;"><span style="display:inline-block;transform:scaleX(0.944);transform-origin:0 50%">sfilt</span></div>
<div class="t" style="left:366.60px;width:29.30px;text-align:center;top:525.88px;height:14.58px;line-height:14.58px;font-size:9.8px;color:#000;"><span style="display:inline-block;transform:scaleX(0.824);transform-origin:50% 50%">W</span></div>
<div class="t mono" style="left:398.6px;top:525.58px;height:14.58px;line-height:14.58px;font-size:10.8px;-webkit-text-stroke:0.3px #1e1e1e;color:#1e1e1e"><span style="display:inline-block;transform:scaleX(0.895);transform-origin:0 50%">0100 0000</span></div>
<div class="t" style="left:454.80px;width:63.80px;text-align:center;top:525.88px;height:14.58px;line-height:14.58px;font-size:9.8px;color:#000;"><span style="display:inline-block;transform:scaleX(0.997);transform-origin:50% 50%">id: 0</span></div>
<div class="btn" style="left:519.3px;top:526.43px;width:74.7px;height:12.8px"></div>
<div class="t" style="left:533.23px;top:527.08px;height:14.58px;line-height:14.58px;font-size:9.8px;color:#111;"><span style="display:inline-block;transform:scaleX(0.916);transform-origin:0 50%">Choice</span></div>
<svg class="a" style="left:571.87px;top:530.28px" width="6" height="7" viewBox="0 0 6 7"><path d="M3 0.5 V4.2" stroke="#111" stroke-width="1.4"/><path d="M0.7 3.3 L3 6.3 L5.3 3.3 Z" fill="#111"/></svg>
<div class="t" style="left:597.50px;top:525.88px;height:14.58px;line-height:14.58px;font-size:9.8px;color:#000;"><span style="display:inline-block;transform:scaleX(0.939);transform-origin:0 50%">Standard ...allGuard2</span></div>
<div class="t" style="left:691.00px;top:525.88px;height:14.58px;line-height:14.58px;font-size:9.8px;color:#000;"><span style="display:inline-block;transform:scaleX(0.953);transform-origin:0 50%">stallGuard2 filter enable</span></div>
<div class="a" style="left:620px;top:562.3px;width:16.7px;height:2.3px;background:#8c8c8c;border-radius:1px;border-bottom:0.8px solid #d0d0d0"></div>
<svg class="a" style="left:1033px;top:566px" width="9" height="9" viewBox="0 0 9 9"><g fill="#a0a0a0"><rect x="6.3" y="1.6" width="1.3" height="1.3"/><rect x="3.8" y="4" width="1.3" height="1.3"/><rect x="6.3" y="4" width="1.3" height="1.3"/><rect x="1.8" y="6.5" width="1.3" height="1.3"/><rect x="3.8" y="6.5" width="1.3" height="1.3"/><rect x="6.3" y="6.5" width="1.3" height="1.3"/></g></svg>
</div></div></body></html>
